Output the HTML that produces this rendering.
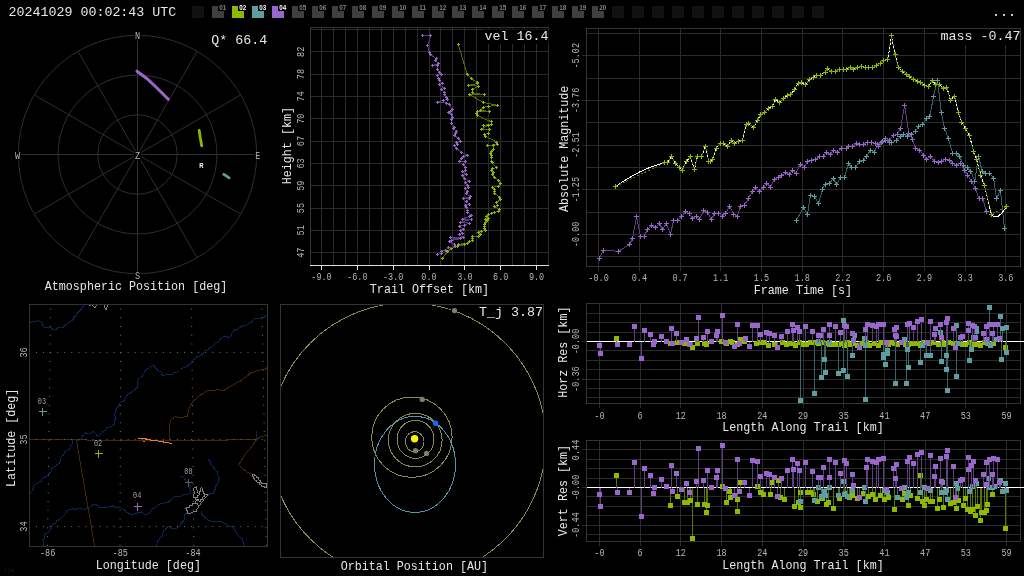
<!DOCTYPE html>
<html lang="en"><head><meta charset="utf-8"><title>Meteor trajectory 20241029 00:02:43 UTC</title>
<style>html,body{margin:0;padding:0;background:#000;overflow:hidden}svg{display:block;will-change:transform;transform:translateZ(0)}text{font-family:'Liberation Mono', 'DejaVu Sans Mono', monospace;white-space:pre}</style></head><body>
<svg width="1024" height="576" viewBox="0 0 1024 576">
<text transform="translate(8.4,16.3)" font-size="13.33" fill="#e8e8e8" text-anchor="start" >20241029 00:02:43 UTC</text>
<rect x="192" y="6" width="12" height="12" fill="#111111"/>
<rect x="212" y="6" width="12" height="12" fill="#3f3f3f"/>
<rect x="218" y="4" width="9" height="7" fill="#000"/>
<text transform="translate(219.3,9.9) scale(0.9,1)" font-size="7" fill="#868686" text-anchor="start" style="font-family:&quot;Liberation Sans&quot;,sans-serif;font-weight:bold">01</text>
<rect x="232" y="6" width="12" height="12" fill="#8fb800"/>
<rect x="238" y="4" width="9" height="7" fill="#000"/>
<text transform="translate(239.3,9.9) scale(0.9,1)" font-size="7" fill="#ffffff" text-anchor="start" style="font-family:&quot;Liberation Sans&quot;,sans-serif;font-weight:bold">02</text>
<rect x="252" y="6" width="12" height="12" fill="#5f9ea0"/>
<rect x="258" y="4" width="9" height="7" fill="#000"/>
<text transform="translate(259.3,9.9) scale(0.9,1)" font-size="7" fill="#ffffff" text-anchor="start" style="font-family:&quot;Liberation Sans&quot;,sans-serif;font-weight:bold">03</text>
<rect x="272" y="6" width="12" height="12" fill="#9966cc"/>
<rect x="278" y="4" width="9" height="7" fill="#000"/>
<text transform="translate(279.3,9.9) scale(0.9,1)" font-size="7" fill="#ffffff" text-anchor="start" style="font-family:&quot;Liberation Sans&quot;,sans-serif;font-weight:bold">04</text>
<rect x="292" y="6" width="12" height="12" fill="#3f3f3f"/>
<rect x="298" y="4" width="9" height="7" fill="#000"/>
<text transform="translate(299.3,9.9) scale(0.9,1)" font-size="7" fill="#868686" text-anchor="start" style="font-family:&quot;Liberation Sans&quot;,sans-serif;font-weight:bold">05</text>
<rect x="312" y="6" width="12" height="12" fill="#3f3f3f"/>
<rect x="318" y="4" width="9" height="7" fill="#000"/>
<text transform="translate(319.3,9.9) scale(0.9,1)" font-size="7" fill="#868686" text-anchor="start" style="font-family:&quot;Liberation Sans&quot;,sans-serif;font-weight:bold">06</text>
<rect x="332" y="6" width="12" height="12" fill="#3f3f3f"/>
<rect x="338" y="4" width="9" height="7" fill="#000"/>
<text transform="translate(339.3,9.9) scale(0.9,1)" font-size="7" fill="#868686" text-anchor="start" style="font-family:&quot;Liberation Sans&quot;,sans-serif;font-weight:bold">07</text>
<rect x="352" y="6" width="12" height="12" fill="#3f3f3f"/>
<rect x="358" y="4" width="9" height="7" fill="#000"/>
<text transform="translate(359.3,9.9) scale(0.9,1)" font-size="7" fill="#868686" text-anchor="start" style="font-family:&quot;Liberation Sans&quot;,sans-serif;font-weight:bold">08</text>
<rect x="372" y="6" width="12" height="12" fill="#3f3f3f"/>
<rect x="378" y="4" width="9" height="7" fill="#000"/>
<text transform="translate(379.3,9.9) scale(0.9,1)" font-size="7" fill="#868686" text-anchor="start" style="font-family:&quot;Liberation Sans&quot;,sans-serif;font-weight:bold">09</text>
<rect x="392" y="6" width="12" height="12" fill="#3f3f3f"/>
<rect x="398" y="4" width="9" height="7" fill="#000"/>
<text transform="translate(399.3,9.9) scale(0.9,1)" font-size="7" fill="#868686" text-anchor="start" style="font-family:&quot;Liberation Sans&quot;,sans-serif;font-weight:bold">10</text>
<rect x="412" y="6" width="12" height="12" fill="#3f3f3f"/>
<rect x="418" y="4" width="9" height="7" fill="#000"/>
<text transform="translate(419.3,9.9) scale(0.9,1)" font-size="7" fill="#868686" text-anchor="start" style="font-family:&quot;Liberation Sans&quot;,sans-serif;font-weight:bold">11</text>
<rect x="432" y="6" width="12" height="12" fill="#3f3f3f"/>
<rect x="438" y="4" width="9" height="7" fill="#000"/>
<text transform="translate(439.3,9.9) scale(0.9,1)" font-size="7" fill="#868686" text-anchor="start" style="font-family:&quot;Liberation Sans&quot;,sans-serif;font-weight:bold">12</text>
<rect x="452" y="6" width="12" height="12" fill="#3f3f3f"/>
<rect x="458" y="4" width="9" height="7" fill="#000"/>
<text transform="translate(459.3,9.9) scale(0.9,1)" font-size="7" fill="#868686" text-anchor="start" style="font-family:&quot;Liberation Sans&quot;,sans-serif;font-weight:bold">13</text>
<rect x="472" y="6" width="12" height="12" fill="#3f3f3f"/>
<rect x="478" y="4" width="9" height="7" fill="#000"/>
<text transform="translate(479.3,9.9) scale(0.9,1)" font-size="7" fill="#868686" text-anchor="start" style="font-family:&quot;Liberation Sans&quot;,sans-serif;font-weight:bold">14</text>
<rect x="492" y="6" width="12" height="12" fill="#3f3f3f"/>
<rect x="498" y="4" width="9" height="7" fill="#000"/>
<text transform="translate(499.3,9.9) scale(0.9,1)" font-size="7" fill="#868686" text-anchor="start" style="font-family:&quot;Liberation Sans&quot;,sans-serif;font-weight:bold">15</text>
<rect x="512" y="6" width="12" height="12" fill="#3f3f3f"/>
<rect x="518" y="4" width="9" height="7" fill="#000"/>
<text transform="translate(519.3,9.9) scale(0.9,1)" font-size="7" fill="#868686" text-anchor="start" style="font-family:&quot;Liberation Sans&quot;,sans-serif;font-weight:bold">16</text>
<rect x="532" y="6" width="12" height="12" fill="#3f3f3f"/>
<rect x="538" y="4" width="9" height="7" fill="#000"/>
<text transform="translate(539.3,9.9) scale(0.9,1)" font-size="7" fill="#868686" text-anchor="start" style="font-family:&quot;Liberation Sans&quot;,sans-serif;font-weight:bold">17</text>
<rect x="552" y="6" width="12" height="12" fill="#3f3f3f"/>
<rect x="558" y="4" width="9" height="7" fill="#000"/>
<text transform="translate(559.3,9.9) scale(0.9,1)" font-size="7" fill="#868686" text-anchor="start" style="font-family:&quot;Liberation Sans&quot;,sans-serif;font-weight:bold">18</text>
<rect x="572" y="6" width="12" height="12" fill="#3f3f3f"/>
<rect x="578" y="4" width="9" height="7" fill="#000"/>
<text transform="translate(579.3,9.9) scale(0.9,1)" font-size="7" fill="#868686" text-anchor="start" style="font-family:&quot;Liberation Sans&quot;,sans-serif;font-weight:bold">19</text>
<rect x="592" y="6" width="12" height="12" fill="#3f3f3f"/>
<rect x="598" y="4" width="9" height="7" fill="#000"/>
<text transform="translate(599.3,9.9) scale(0.9,1)" font-size="7" fill="#868686" text-anchor="start" style="font-family:&quot;Liberation Sans&quot;,sans-serif;font-weight:bold">20</text>
<rect x="612" y="6" width="12" height="12" fill="#111111"/>
<rect x="632" y="6" width="12" height="12" fill="#111111"/>
<rect x="652" y="6" width="12" height="12" fill="#111111"/>
<rect x="672" y="6" width="12" height="12" fill="#111111"/>
<rect x="692" y="6" width="12" height="12" fill="#111111"/>
<rect x="712" y="6" width="12" height="12" fill="#111111"/>
<rect x="732" y="6" width="12" height="12" fill="#111111"/>
<rect x="752" y="6" width="12" height="12" fill="#111111"/>
<rect x="772" y="6" width="12" height="12" fill="#111111"/>
<rect x="792" y="6" width="12" height="12" fill="#111111"/>
<rect x="812" y="6" width="12" height="12" fill="#111111"/>
<text transform="translate(1016,16.3)" font-size="13.33" fill="#ffffff" text-anchor="end" >...</text>
<circle cx="137.5" cy="154.5" r="39.73" fill="none" stroke="#2f2f2f" stroke-width="1"/>
<circle cx="137.5" cy="154.5" r="79.47" fill="none" stroke="#2f2f2f" stroke-width="1"/>
<circle cx="137.5" cy="154.5" r="119.2" fill="none" stroke="#2f2f2f" stroke-width="1"/>
<line x1="137.5" y1="154.5" x2="137.5" y2="35.3" stroke="#2f2f2f" stroke-width="1"  shape-rendering="crispEdges"/>
<line x1="137.5" y1="154.5" x2="197.1" y2="51.27" stroke="#2f2f2f" stroke-width="1" />
<line x1="137.5" y1="154.5" x2="240.73" y2="94.9" stroke="#2f2f2f" stroke-width="1" />
<line x1="137.5" y1="154.5" x2="256.7" y2="154.5" stroke="#2f2f2f" stroke-width="1"  shape-rendering="crispEdges"/>
<line x1="137.5" y1="154.5" x2="240.73" y2="214.1" stroke="#2f2f2f" stroke-width="1" />
<line x1="137.5" y1="154.5" x2="197.1" y2="257.73" stroke="#2f2f2f" stroke-width="1" />
<line x1="137.5" y1="154.5" x2="137.5" y2="273.7" stroke="#2f2f2f" stroke-width="1"  shape-rendering="crispEdges"/>
<line x1="137.5" y1="154.5" x2="77.9" y2="257.73" stroke="#2f2f2f" stroke-width="1" />
<line x1="137.5" y1="154.5" x2="34.27" y2="214.1" stroke="#2f2f2f" stroke-width="1" />
<line x1="137.5" y1="154.5" x2="18.3" y2="154.5" stroke="#2f2f2f" stroke-width="1"  shape-rendering="crispEdges"/>
<line x1="137.5" y1="154.5" x2="34.27" y2="94.9" stroke="#2f2f2f" stroke-width="1" />
<line x1="137.5" y1="154.5" x2="77.9" y2="51.27" stroke="#2f2f2f" stroke-width="1" />
<rect x="134" y="31.5" width="7" height="9" fill="#000"/>
<text transform="translate(137.5,39.4) scale(0.82,1)" font-size="10.4" fill="#b4b4b4" text-anchor="middle" >N</text>
<rect x="254.2" y="151.5" width="7" height="9" fill="#000"/>
<text transform="translate(257.7,159.4) scale(0.82,1)" font-size="10.4" fill="#b4b4b4" text-anchor="middle" >E</text>
<rect x="134" y="271.5" width="7" height="9" fill="#000"/>
<text transform="translate(137.5,279.4) scale(0.82,1)" font-size="10.4" fill="#b4b4b4" text-anchor="middle" >S</text>
<rect x="14" y="151.5" width="7" height="9" fill="#000"/>
<text transform="translate(17.5,159.4) scale(0.82,1)" font-size="10.4" fill="#b4b4b4" text-anchor="middle" >W</text>
<rect x="134" y="151.5" width="7" height="9" fill="#000"/>
<text transform="translate(137.5,159.4) scale(0.82,1)" font-size="10.4" fill="#b4b4b4" text-anchor="middle" >Z</text>
<polyline points="137,71.2 147.4,79 157,88 168.3,99.2" fill="none" stroke="#9966cc" stroke-width="3" stroke-linecap="round"/>
<polyline points="199.2,130.4 200.3,138 201.7,145.8" fill="none" stroke="#8fb800" stroke-width="2.8" stroke-linecap="round"/>
<polyline points="223.8,174.3 229.2,177.8" fill="none" stroke="#5f9ea0" stroke-width="2.8" stroke-linecap="round"/>
<text transform="translate(201.5,168) scale(0.85,1)" font-size="7" fill="#ffffff" text-anchor="middle" style="font-family:&quot;Liberation Sans&quot;,sans-serif;font-weight:bold">R</text>
<text transform="translate(267.2,44.2)" font-size="13.33" fill="#e6e6e6" text-anchor="end" >Q* 66.4</text>
<text transform="translate(136,290.2) scale(0.9,1)" font-size="13.0" fill="#e6e6e6" text-anchor="middle" >Atmospheric Position [deg]</text>
<line x1="321.5" y1="27.8" x2="321.5" y2="265.5" stroke="#2b2b2b" stroke-width="1"  shape-rendering="crispEdges"/>
<line x1="333.5" y1="27.8" x2="333.5" y2="265.5" stroke="#2b2b2b" stroke-width="1"  shape-rendering="crispEdges"/>
<line x1="345.5" y1="27.8" x2="345.5" y2="265.5" stroke="#2b2b2b" stroke-width="1"  shape-rendering="crispEdges"/>
<line x1="357.5" y1="27.8" x2="357.5" y2="265.5" stroke="#2b2b2b" stroke-width="1"  shape-rendering="crispEdges"/>
<line x1="369.5" y1="27.8" x2="369.5" y2="265.5" stroke="#2b2b2b" stroke-width="1"  shape-rendering="crispEdges"/>
<line x1="381.5" y1="27.8" x2="381.5" y2="265.5" stroke="#2b2b2b" stroke-width="1"  shape-rendering="crispEdges"/>
<line x1="393.5" y1="27.8" x2="393.5" y2="265.5" stroke="#2b2b2b" stroke-width="1"  shape-rendering="crispEdges"/>
<line x1="405.5" y1="27.8" x2="405.5" y2="265.5" stroke="#2b2b2b" stroke-width="1"  shape-rendering="crispEdges"/>
<line x1="417.5" y1="27.8" x2="417.5" y2="265.5" stroke="#2b2b2b" stroke-width="1"  shape-rendering="crispEdges"/>
<line x1="429.5" y1="27.8" x2="429.5" y2="265.5" stroke="#2b2b2b" stroke-width="1"  shape-rendering="crispEdges"/>
<line x1="440.5" y1="27.8" x2="440.5" y2="265.5" stroke="#2b2b2b" stroke-width="1"  shape-rendering="crispEdges"/>
<line x1="452.5" y1="27.8" x2="452.5" y2="265.5" stroke="#2b2b2b" stroke-width="1"  shape-rendering="crispEdges"/>
<line x1="464.5" y1="27.8" x2="464.5" y2="265.5" stroke="#2b2b2b" stroke-width="1"  shape-rendering="crispEdges"/>
<line x1="476.5" y1="27.8" x2="476.5" y2="265.5" stroke="#2b2b2b" stroke-width="1"  shape-rendering="crispEdges"/>
<line x1="488.5" y1="27.8" x2="488.5" y2="265.5" stroke="#2b2b2b" stroke-width="1"  shape-rendering="crispEdges"/>
<line x1="500.5" y1="27.8" x2="500.5" y2="265.5" stroke="#2b2b2b" stroke-width="1"  shape-rendering="crispEdges"/>
<line x1="512.5" y1="27.8" x2="512.5" y2="265.5" stroke="#2b2b2b" stroke-width="1"  shape-rendering="crispEdges"/>
<line x1="524.5" y1="27.8" x2="524.5" y2="265.5" stroke="#2b2b2b" stroke-width="1"  shape-rendering="crispEdges"/>
<line x1="536.5" y1="27.8" x2="536.5" y2="265.5" stroke="#2b2b2b" stroke-width="1"  shape-rendering="crispEdges"/>
<line x1="548.5" y1="27.8" x2="548.5" y2="265.5" stroke="#2b2b2b" stroke-width="1"  shape-rendering="crispEdges"/>
<line x1="310.4" y1="29.5" x2="548.6" y2="29.5" stroke="#2b2b2b" stroke-width="1"  shape-rendering="crispEdges"/>
<line x1="310.4" y1="51.5" x2="548.6" y2="51.5" stroke="#2b2b2b" stroke-width="1"  shape-rendering="crispEdges"/>
<line x1="310.4" y1="74.5" x2="548.6" y2="74.5" stroke="#2b2b2b" stroke-width="1"  shape-rendering="crispEdges"/>
<line x1="310.4" y1="96.5" x2="548.6" y2="96.5" stroke="#2b2b2b" stroke-width="1"  shape-rendering="crispEdges"/>
<line x1="310.4" y1="118.5" x2="548.6" y2="118.5" stroke="#2b2b2b" stroke-width="1"  shape-rendering="crispEdges"/>
<line x1="310.4" y1="141.5" x2="548.6" y2="141.5" stroke="#2b2b2b" stroke-width="1"  shape-rendering="crispEdges"/>
<line x1="310.4" y1="163.5" x2="548.6" y2="163.5" stroke="#2b2b2b" stroke-width="1"  shape-rendering="crispEdges"/>
<line x1="310.4" y1="185.5" x2="548.6" y2="185.5" stroke="#2b2b2b" stroke-width="1"  shape-rendering="crispEdges"/>
<line x1="310.4" y1="208.5" x2="548.6" y2="208.5" stroke="#2b2b2b" stroke-width="1"  shape-rendering="crispEdges"/>
<line x1="310.4" y1="230.5" x2="548.6" y2="230.5" stroke="#2b2b2b" stroke-width="1"  shape-rendering="crispEdges"/>
<line x1="310.4" y1="252.5" x2="548.6" y2="252.5" stroke="#2b2b2b" stroke-width="1"  shape-rendering="crispEdges"/>
<line x1="310.4" y1="27.5" x2="548.6" y2="27.5" stroke="#343434" stroke-width="1"  shape-rendering="crispEdges"/>
<line x1="310.5" y1="27.8" x2="310.5" y2="265.5" stroke="#343434" stroke-width="1"  shape-rendering="crispEdges"/>
<line x1="309.9" y1="265.5" x2="548.6" y2="265.5" stroke="#e0e0e0" stroke-width="1"  shape-rendering="crispEdges"/>
<line x1="321.5" y1="265.5" x2="321.5" y2="270" stroke="#e0e0e0" stroke-width="1"  shape-rendering="crispEdges"/>
<text transform="translate(321.51,280.2) scale(0.82,1)" font-size="10.4" fill="#b4b4b4" text-anchor="middle" >-9.0</text>
<line x1="357.5" y1="265.5" x2="357.5" y2="270" stroke="#e0e0e0" stroke-width="1"  shape-rendering="crispEdges"/>
<text transform="translate(357.35,280.2) scale(0.82,1)" font-size="10.4" fill="#b4b4b4" text-anchor="middle" >-6.0</text>
<line x1="393.5" y1="265.5" x2="393.5" y2="270" stroke="#e0e0e0" stroke-width="1"  shape-rendering="crispEdges"/>
<text transform="translate(393.19,280.2) scale(0.82,1)" font-size="10.4" fill="#b4b4b4" text-anchor="middle" >-3.0</text>
<line x1="429.5" y1="265.5" x2="429.5" y2="270" stroke="#e0e0e0" stroke-width="1"  shape-rendering="crispEdges"/>
<text transform="translate(429.03,280.2) scale(0.82,1)" font-size="10.4" fill="#b4b4b4" text-anchor="middle" >0.0</text>
<line x1="464.5" y1="265.5" x2="464.5" y2="270" stroke="#e0e0e0" stroke-width="1"  shape-rendering="crispEdges"/>
<text transform="translate(464.87,280.2) scale(0.82,1)" font-size="10.4" fill="#b4b4b4" text-anchor="middle" >3.0</text>
<line x1="500.5" y1="265.5" x2="500.5" y2="270" stroke="#e0e0e0" stroke-width="1"  shape-rendering="crispEdges"/>
<text transform="translate(500.71,280.2) scale(0.82,1)" font-size="10.4" fill="#b4b4b4" text-anchor="middle" >6.0</text>
<line x1="536.5" y1="265.5" x2="536.5" y2="270" stroke="#e0e0e0" stroke-width="1"  shape-rendering="crispEdges"/>
<text transform="translate(536.55,280.2) scale(0.82,1)" font-size="10.4" fill="#b4b4b4" text-anchor="middle" >9.0</text>
<text transform="translate(304.2,51.8) rotate(-90) scale(0.82,1)" font-size="10.4" fill="#b4b4b4" text-anchor="middle" >82</text>
<text transform="translate(304.2,74.12) rotate(-90) scale(0.82,1)" font-size="10.4" fill="#b4b4b4" text-anchor="middle" >78</text>
<text transform="translate(304.2,96.44) rotate(-90) scale(0.82,1)" font-size="10.4" fill="#b4b4b4" text-anchor="middle" >74</text>
<text transform="translate(304.2,118.76) rotate(-90) scale(0.82,1)" font-size="10.4" fill="#b4b4b4" text-anchor="middle" >70</text>
<text transform="translate(304.2,141.08) rotate(-90) scale(0.82,1)" font-size="10.4" fill="#b4b4b4" text-anchor="middle" >67</text>
<text transform="translate(304.2,163.4) rotate(-90) scale(0.82,1)" font-size="10.4" fill="#b4b4b4" text-anchor="middle" >63</text>
<text transform="translate(304.2,185.72) rotate(-90) scale(0.82,1)" font-size="10.4" fill="#b4b4b4" text-anchor="middle" >59</text>
<text transform="translate(304.2,208.04) rotate(-90) scale(0.82,1)" font-size="10.4" fill="#b4b4b4" text-anchor="middle" >55</text>
<text transform="translate(304.2,230.36) rotate(-90) scale(0.82,1)" font-size="10.4" fill="#b4b4b4" text-anchor="middle" >51</text>
<text transform="translate(304.2,252.68) rotate(-90) scale(0.82,1)" font-size="10.4" fill="#b4b4b4" text-anchor="middle" >47</text>
<text transform="translate(290.5,145.6) rotate(-90) scale(0.9,1)" font-size="13.0" fill="#e6e6e6" text-anchor="middle" >Height [km]</text>
<text transform="translate(429.5,293) scale(0.9,1)" font-size="13.0" fill="#e6e6e6" text-anchor="middle" >Trail Offset [km]</text>
<rect x="483" y="29.5" width="65.6" height="14.5" fill="#000"/>
<text transform="translate(548.4,39.7)" font-size="13.33" fill="#e6e6e6" text-anchor="end" >vel 16.4</text>
<polyline points="458.4,44.5 467.3,74.5 471.2,78.4 477.1,82.3 477.7,83.6 468.3,85.3 478.6,86.2 472.5,89.5 472.5,92.9 484.5,94.6 469.2,94.6 483.6,102.4 497.5,105.4 488.1,106.3 483.6,107.3 480.3,110.2 489.4,111.5 477.7,111.5 476.7,113.4 477.3,115.4 491.4,121.9 491.8,124.5 483.6,125.2 488.1,125.4 481.4,129.3 489.4,129.3 488.4,133.4 484.5,134.3 485.5,136.2 496.6,142.1 497.5,144.4 487.5,145.6 493.3,145.6 493.3,149.5 491.8,151.2 490.7,153.2 491.4,155.8 491.8,157.7 491.4,161 492,162.9 496.2,167.6 492,168.7 491.4,170.6 493.3,172.3 492.3,174.5 494.6,177.5 498.5,180.1 500.8,183.9 498.5,186.2 492.4,187.2 494.4,189.1 494.6,191.1 494.9,193.4 499.2,197.1 500.5,199.5 496.3,202.5 497.5,205.1 494.4,206.7 499.5,209.4 498.5,211.4 494.6,212.3 491.4,213.3 488.1,214.9 486.8,216.8 488.4,218.2 485.9,219.2 487.9,220.8 485.3,222.7 484.2,224.7 484.5,226.6 484.9,228.6 485.5,230.6 481.4,231.2 478.4,232.2 480.3,234.5 478.6,236.5 472.5,236.5 472.9,238.4 472.2,240.4 469.2,241.7 467.3,243.4 458.4,244.3 464.4,244.7 457.5,246.2 451.7,248.4 447.1,251.8 442.6,258.3" fill="none" stroke="#536b00" stroke-width="1" shape-rendering="crispEdges"/>
<path d="M457 44.5H460M458.5 43V46M466 74.5H469M467.5 73V76M470 78.5H473M471.5 77V80M476 82.5H479M477.5 81V84M476 83.5H479M477.5 82V85M467 85.5H470M468.5 84V87M477 86.5H480M478.5 85V88M471 89.5H474M472.5 88V91M471 92.5H474M472.5 91V94M483 94.5H486M484.5 93V96M468 94.5H471M469.5 93V96M482 102.5H485M483.5 101V104M496 105.5H499M497.5 104V107M487 106.5H490M488.5 105V108M482 107.5H485M483.5 106V109M479 110.5H482M480.5 109V112M488 111.5H491M489.5 110V113M476 111.5H479M477.5 110V113M475 113.5H478M476.5 112V115M476 115.5H479M477.5 114V117M490 121.5H493M491.5 120V123M490 124.5H493M491.5 123V126M482 125.5H485M483.5 124V127M487 125.5H490M488.5 124V127M480 129.5H483M481.5 128V131M488 129.5H491M489.5 128V131M487 133.5H490M488.5 132V135M483 134.5H486M484.5 133V136M484 136.5H487M485.5 135V138M495 142.5H498M496.5 141V144M496 144.5H499M497.5 143V146M486 145.5H489M487.5 144V147M492 145.5H495M493.5 144V147M492 149.5H495M493.5 148V151M490 151.5H493M491.5 150V153M489 153.5H492M490.5 152V155M490 155.5H493M491.5 154V157M490 157.5H493M491.5 156V159M490 161.5H493M491.5 160V163M491 162.5H494M492.5 161V164M495 167.5H498M496.5 166V169M491 168.5H494M492.5 167V170M490 170.5H493M491.5 169V172M492 172.5H495M493.5 171V174M491 174.5H494M492.5 173V176M493 177.5H496M494.5 176V179M497 180.5H500M498.5 179V182M499 183.5H502M500.5 182V185M497 186.5H500M498.5 185V188M491 187.5H494M492.5 186V189M493 189.5H496M494.5 188V191M493 191.5H496M494.5 190V193M493 193.5H496M494.5 192V195M498 197.5H501M499.5 196V199M499 199.5H502M500.5 198V201M495 202.5H498M496.5 201V204M496 205.5H499M497.5 204V207M493 206.5H496M494.5 205V208M498 209.5H501M499.5 208V211M497 211.5H500M498.5 210V213M493 212.5H496M494.5 211V214M490 213.5H493M491.5 212V215M487 214.5H490M488.5 213V216M485 216.5H488M486.5 215V218M487 218.5H490M488.5 217V220M484 219.5H487M485.5 218V221M486 220.5H489M487.5 219V222M484 222.5H487M485.5 221V224M483 224.5H486M484.5 223V226M483 226.5H486M484.5 225V228M483 228.5H486M484.5 227V230M484 230.5H487M485.5 229V232M480 231.5H483M481.5 230V233M477 232.5H480M478.5 231V234M479 234.5H482M480.5 233V236M477 236.5H480M478.5 235V238M471 236.5H474M472.5 235V238M471 238.5H474M472.5 237V240M471 240.5H474M472.5 239V242M468 241.5H471M469.5 240V243M466 243.5H469M467.5 242V245M457 244.5H460M458.5 243V246M463 244.5H466M464.5 243V246M456 246.5H459M457.5 245V248M450 248.5H453M451.5 247V250M446 251.5H449M447.5 250V253M441 258.5H444M442.5 257V260" stroke="#8fb800" stroke-width="1" fill="none" shape-rendering="crispEdges"/>
<polyline points="422.4,35.4 430.8,35.4 427.6,45.4 429.5,52.3 430.4,54.3 436,58.6 435.4,60.4 438.4,63.4 432.4,65.5 437.6,65.5 437.1,69.3 439.7,72.5 441.5,74.5 437.3,75.4 438.4,78.4 439.7,80.7 442.3,83.6 439.3,84.5 444.5,88.4 441.5,89.5 444.5,92 444.5,94.6 446.2,97.8 447.8,99.4 443.6,100.2 437.3,102.4 446.5,103 449.7,104.3 452.3,109.5 450.4,111.5 448.7,112.4 451.4,114.7 452.3,117.3 451.4,119.7 451.7,123.2 454.3,127.1 453.6,128.4 456.2,131.4 455.6,133.6 454.5,135.6 458.4,138.4 460.5,141.4 456.9,142.5 457.5,144.4 454.3,145.6 456.5,148.6 461.4,152.2 467.3,155.4 463.4,156.7 461.8,158.4 459.5,161.4 465.3,161.4 463.1,164.2 465.3,167.4 465.6,170.6 462.5,171.3 466.2,174.5 462.5,175.2 464.4,178.4 469.2,181.4 465.7,182.3 467.7,185.6 468.2,187.6 465.3,188.6 467.3,191.8 466.4,193.4 470.3,196.7 463.4,198.4 469.5,198.6 466.2,201.2 469.5,204.5 465.6,205.1 466.4,207.7 467.7,210.7 467.9,212.3 471.5,215.2 469.9,216.2 462.5,219.2 471.5,219.2 460.5,222.4 469.2,223.1 464.4,225.3 459.5,226.2 463.4,229.2 460.1,230.6 462.5,233.2 459.2,234.5 463.4,237.5 450.6,237.8 460.1,238.8 451.4,240.4 449.1,241.7 454.9,244.9 455.6,246.9 448.4,247.1 445.8,250.1 441.6,251.2 441.9,253.4 437.3,254.4" fill="none" stroke="#573a77" stroke-width="1" shape-rendering="crispEdges"/>
<path d="M421 35.5H424M422.5 34V37M429 35.5H432M430.5 34V37M426 45.5H429M427.5 44V47M428 52.5H431M429.5 51V54M429 54.5H432M430.5 53V56M435 58.5H438M436.5 57V60M434 60.5H437M435.5 59V62M437 63.5H440M438.5 62V65M431 65.5H434M432.5 64V67M436 65.5H439M437.5 64V67M436 69.5H439M437.5 68V71M438 72.5H441M439.5 71V74M440 74.5H443M441.5 73V76M436 75.5H439M437.5 74V77M437 78.5H440M438.5 77V80M438 80.5H441M439.5 79V82M441 83.5H444M442.5 82V85M438 84.5H441M439.5 83V86M443 88.5H446M444.5 87V90M440 89.5H443M441.5 88V91M443 92.5H446M444.5 91V94M443 94.5H446M444.5 93V96M445 97.5H448M446.5 96V99M446 99.5H449M447.5 98V101M442 100.5H445M443.5 99V102M436 102.5H439M437.5 101V104M445 103.5H448M446.5 102V105M448 104.5H451M449.5 103V106M451 109.5H454M452.5 108V111M449 111.5H452M450.5 110V113M447 112.5H450M448.5 111V114M450 114.5H453M451.5 113V116M451 117.5H454M452.5 116V119M450 119.5H453M451.5 118V121M450 123.5H453M451.5 122V125M453 127.5H456M454.5 126V129M452 128.5H455M453.5 127V130M455 131.5H458M456.5 130V133M454 133.5H457M455.5 132V135M453 135.5H456M454.5 134V137M457 138.5H460M458.5 137V140M459 141.5H462M460.5 140V143M455 142.5H458M456.5 141V144M456 144.5H459M457.5 143V146M453 145.5H456M454.5 144V147M455 148.5H458M456.5 147V150M460 152.5H463M461.5 151V154M466 155.5H469M467.5 154V157M462 156.5H465M463.5 155V158M460 158.5H463M461.5 157V160M458 161.5H461M459.5 160V163M464 161.5H467M465.5 160V163M462 164.5H465M463.5 163V166M464 167.5H467M465.5 166V169M464 170.5H467M465.5 169V172M461 171.5H464M462.5 170V173M465 174.5H468M466.5 173V176M461 175.5H464M462.5 174V177M463 178.5H466M464.5 177V180M468 181.5H471M469.5 180V183M464 182.5H467M465.5 181V184M466 185.5H469M467.5 184V187M467 187.5H470M468.5 186V189M464 188.5H467M465.5 187V190M466 191.5H469M467.5 190V193M465 193.5H468M466.5 192V195M469 196.5H472M470.5 195V198M462 198.5H465M463.5 197V200M468 198.5H471M469.5 197V200M465 201.5H468M466.5 200V203M468 204.5H471M469.5 203V206M464 205.5H467M465.5 204V207M465 207.5H468M466.5 206V209M466 210.5H469M467.5 209V212M466 212.5H469M467.5 211V214M470 215.5H473M471.5 214V217M468 216.5H471M469.5 215V218M461 219.5H464M462.5 218V221M470 219.5H473M471.5 218V221M459 222.5H462M460.5 221V224M468 223.5H471M469.5 222V225M463 225.5H466M464.5 224V227M458 226.5H461M459.5 225V228M462 229.5H465M463.5 228V231M459 230.5H462M460.5 229V232M461 233.5H464M462.5 232V235M458 234.5H461M459.5 233V236M462 237.5H465M463.5 236V239M449 237.5H452M450.5 236V239M459 238.5H462M460.5 237V240M450 240.5H453M451.5 239V242M448 241.5H451M449.5 240V243M453 244.5H456M454.5 243V246M454 246.5H457M455.5 245V248M447 247.5H450M448.5 246V249M444 250.5H447M445.5 249V252M440 251.5H443M441.5 250V253M440 253.5H443M441.5 252V255M436 254.5H439M437.5 253V256" stroke="#9966cc" stroke-width="1" fill="none" shape-rendering="crispEdges"/>
<line x1="598.5" y1="28.4" x2="598.5" y2="270.7" stroke="#2b2b2b" stroke-width="1"  shape-rendering="crispEdges"/>
<line x1="639.5" y1="28.4" x2="639.5" y2="270.7" stroke="#2b2b2b" stroke-width="1"  shape-rendering="crispEdges"/>
<line x1="680.5" y1="28.4" x2="680.5" y2="270.7" stroke="#2b2b2b" stroke-width="1"  shape-rendering="crispEdges"/>
<line x1="720.5" y1="28.4" x2="720.5" y2="270.7" stroke="#2b2b2b" stroke-width="1"  shape-rendering="crispEdges"/>
<line x1="761.5" y1="28.4" x2="761.5" y2="270.7" stroke="#2b2b2b" stroke-width="1"  shape-rendering="crispEdges"/>
<line x1="802.5" y1="28.4" x2="802.5" y2="270.7" stroke="#2b2b2b" stroke-width="1"  shape-rendering="crispEdges"/>
<line x1="842.5" y1="28.4" x2="842.5" y2="270.7" stroke="#2b2b2b" stroke-width="1"  shape-rendering="crispEdges"/>
<line x1="883.5" y1="28.4" x2="883.5" y2="270.7" stroke="#2b2b2b" stroke-width="1"  shape-rendering="crispEdges"/>
<line x1="924.5" y1="28.4" x2="924.5" y2="270.7" stroke="#2b2b2b" stroke-width="1"  shape-rendering="crispEdges"/>
<line x1="965.5" y1="28.4" x2="965.5" y2="270.7" stroke="#2b2b2b" stroke-width="1"  shape-rendering="crispEdges"/>
<line x1="1005.5" y1="28.4" x2="1005.5" y2="270.7" stroke="#2b2b2b" stroke-width="1"  shape-rendering="crispEdges"/>
<line x1="586.5" y1="33.5" x2="1020.7" y2="33.5" stroke="#2b2b2b" stroke-width="1"  shape-rendering="crispEdges"/>
<line x1="581.8" y1="55.5" x2="1020.7" y2="55.5" stroke="#2b2b2b" stroke-width="1"  shape-rendering="crispEdges"/>
<line x1="586.5" y1="78.5" x2="1020.7" y2="78.5" stroke="#2b2b2b" stroke-width="1"  shape-rendering="crispEdges"/>
<line x1="581.8" y1="100.5" x2="1020.7" y2="100.5" stroke="#2b2b2b" stroke-width="1"  shape-rendering="crispEdges"/>
<line x1="586.5" y1="122.5" x2="1020.7" y2="122.5" stroke="#2b2b2b" stroke-width="1"  shape-rendering="crispEdges"/>
<line x1="581.8" y1="145.5" x2="1020.7" y2="145.5" stroke="#2b2b2b" stroke-width="1"  shape-rendering="crispEdges"/>
<line x1="586.5" y1="167.5" x2="1020.7" y2="167.5" stroke="#2b2b2b" stroke-width="1"  shape-rendering="crispEdges"/>
<line x1="581.8" y1="189.5" x2="1020.7" y2="189.5" stroke="#2b2b2b" stroke-width="1"  shape-rendering="crispEdges"/>
<line x1="586.5" y1="212.5" x2="1020.7" y2="212.5" stroke="#2b2b2b" stroke-width="1"  shape-rendering="crispEdges"/>
<line x1="581.8" y1="234.5" x2="1020.7" y2="234.5" stroke="#2b2b2b" stroke-width="1"  shape-rendering="crispEdges"/>
<line x1="586.5" y1="256.5" x2="1020.7" y2="256.5" stroke="#2b2b2b" stroke-width="1"  shape-rendering="crispEdges"/>
<rect x="586.5" y="28.5" width="434" height="238" fill="none" stroke="#343434" shape-rendering="crispEdges"/>
<text transform="translate(598.6,280.7) scale(0.82,1)" font-size="10.4" fill="#b4b4b4" text-anchor="middle" >-0.0</text>
<text transform="translate(639.32,280.7) scale(0.82,1)" font-size="10.4" fill="#b4b4b4" text-anchor="middle" >0.4</text>
<text transform="translate(680.04,280.7) scale(0.82,1)" font-size="10.4" fill="#b4b4b4" text-anchor="middle" >0.7</text>
<text transform="translate(720.76,280.7) scale(0.82,1)" font-size="10.4" fill="#b4b4b4" text-anchor="middle" >1.1</text>
<text transform="translate(761.48,280.7) scale(0.82,1)" font-size="10.4" fill="#b4b4b4" text-anchor="middle" >1.5</text>
<text transform="translate(802.2,280.7) scale(0.82,1)" font-size="10.4" fill="#b4b4b4" text-anchor="middle" >1.8</text>
<text transform="translate(842.92,280.7) scale(0.82,1)" font-size="10.4" fill="#b4b4b4" text-anchor="middle" >2.2</text>
<text transform="translate(883.64,280.7) scale(0.82,1)" font-size="10.4" fill="#b4b4b4" text-anchor="middle" >2.6</text>
<text transform="translate(924.36,280.7) scale(0.82,1)" font-size="10.4" fill="#b4b4b4" text-anchor="middle" >2.9</text>
<text transform="translate(965.08,280.7) scale(0.82,1)" font-size="10.4" fill="#b4b4b4" text-anchor="middle" >3.3</text>
<text transform="translate(1005.8,280.7) scale(0.82,1)" font-size="10.4" fill="#b4b4b4" text-anchor="middle" >3.6</text>
<text transform="translate(579.4,55.78) rotate(-90) scale(0.82,1)" font-size="10.4" fill="#b4b4b4" text-anchor="middle" >-5.02</text>
<text transform="translate(579.4,100.44) rotate(-90) scale(0.82,1)" font-size="10.4" fill="#b4b4b4" text-anchor="middle" >-3.76</text>
<text transform="translate(579.4,145.1) rotate(-90) scale(0.82,1)" font-size="10.4" fill="#b4b4b4" text-anchor="middle" >-2.51</text>
<text transform="translate(579.4,189.76) rotate(-90) scale(0.82,1)" font-size="10.4" fill="#b4b4b4" text-anchor="middle" >-1.25</text>
<text transform="translate(579.4,234.42) rotate(-90) scale(0.82,1)" font-size="10.4" fill="#b4b4b4" text-anchor="middle" >-0.00</text>
<text transform="translate(567.6,148.8) rotate(-90) scale(0.9,1)" font-size="13.0" fill="#e6e6e6" text-anchor="middle" >Absolute Magnitude</text>
<text transform="translate(802.9,293.6) scale(0.9,1)" font-size="13.0" fill="#e6e6e6" text-anchor="middle" >Frame Time [s]</text>
<rect x="938" y="29.5" width="82" height="15.5" fill="#000"/>
<text transform="translate(1020.5,39.8)" font-size="13.33" fill="#e6e6e6" text-anchor="end" >mass -0.47</text>
<polyline points="796.5,220 803.5,207.5 807.5,214.4 810.4,195 814.6,196.5 818.5,203.5 822.5,189.4 825.2,184 829.6,183.1 833.5,178.5 836.5,184.4 840.6,177.2 844.6,177.2 848.5,163.1 851.2,167.5 855.6,167.5 859.4,161.2 863.5,160.4 866.5,156.2 870.6,150.4 874.6,152.2 877.5,144.4 882.5,141.2 885.4,140.2 889.4,142.5 891.9,142.5 896.2,140.2 900.6,136.6 903.5,134 907.5,136.6 911.5,134 915.4,131.2 918.5,126.5 922.5,124.1 926.5,118.8 929.8,116.9 933.5,96.2 937.5,80.2 941.2,112.5 944.5,128.5 948.5,138.8 952.5,153.1 956.6,153.1 959.8,156.5 963.5,165.6 967.2,167.8 970.8,171.2 974.8,181.2 978.5,156.5 982.2,171.2 985.4,173.5 989.8,173.5 993.5,178.1 996.6,198.5 1000.4,190.2 1004.5,228.5" fill="none" stroke="#38605f" stroke-width="1" shape-rendering="crispEdges"/>
<path d="M794 220.5H799M796.5 218V223M801 207.5H806M803.5 205V210M805 214.5H810M807.5 212V217M808 195.5H813M810.5 193V198M812 196.5H817M814.5 194V199M816 203.5H821M818.5 201V206M820 189.5H825M822.5 187V192M823 184.5H828M825.5 182V187M827 183.5H832M829.5 181V186M831 178.5H836M833.5 176V181M834 184.5H839M836.5 182V187M838 177.5H843M840.5 175V180M842 177.5H847M844.5 175V180M846 163.5H851M848.5 161V166M849 167.5H854M851.5 165V170M853 167.5H858M855.5 165V170M857 161.5H862M859.5 159V164M861 160.5H866M863.5 158V163M864 156.5H869M866.5 154V159M868 150.5H873M870.5 148V153M872 152.5H877M874.5 150V155M875 144.5H880M877.5 142V147M880 141.5H885M882.5 139V144M883 140.5H888M885.5 138V143M887 142.5H892M889.5 140V145M889 142.5H894M891.5 140V145M894 140.5H899M896.5 138V143M898 136.5H903M900.5 134V139M901 134.5H906M903.5 132V137M905 136.5H910M907.5 134V139M909 134.5H914M911.5 132V137M913 131.5H918M915.5 129V134M916 126.5H921M918.5 124V129M920 124.5H925M922.5 122V127M924 118.5H929M926.5 116V121M927 116.5H932M929.5 114V119M931 96.5H936M933.5 94V99M935 80.5H940M937.5 78V83M939 112.5H944M941.5 110V115M942 128.5H947M944.5 126V131M946 138.5H951M948.5 136V141M950 153.5H955M952.5 151V156M954 153.5H959M956.5 151V156M957 156.5H962M959.5 154V159M961 165.5H966M963.5 163V168M965 167.5H970M967.5 165V170M968 171.5H973M970.5 169V174M972 181.5H977M974.5 179V184M976 156.5H981M978.5 154V159M980 171.5H985M982.5 169V174M983 173.5H988M985.5 171V176M987 173.5H992M989.5 171V176M991 178.5H996M993.5 176V181M994 198.5H999M996.5 196V201M998 190.5H1003M1000.5 188V193M1002 228.5H1007M1004.5 226V231" stroke="#5f9ea0" stroke-width="1" fill="none" shape-rendering="crispEdges"/>
<polyline points="599.5,258.2 603.5,250.4 618.5,251.2 629.5,244.4 632.5,238.5 636.6,216.6 640.4,236.2 644.5,236.2 647.2,229.5 651.2,225.8 655.4,227.2 659.5,223.5 662.5,229.5 666.4,223.5 670.6,234.4 673.5,220.4 677.6,220.4 681.6,216.6 685.4,211.6 689.1,213.5 692.5,218.5 696.2,216.2 699.5,219.4 703.5,210.8 707.2,212.2 711.4,219.4 714.8,213.1 718.8,213.1 722.5,216.2 725.6,213.1 729.6,206.2 733.5,214.4 737.5,216.2 740.2,206.2 744.4,205.2 748.5,198.1 752.5,191.2 755.4,187.9 759.4,191.2 763.5,187.2 766.5,183.1 770.6,187.1 774.4,179.4 778.5,177.2 781.9,175.6 785.6,172.5 789.4,174.4 792.5,170.2 796.2,173.4 800,164.1 804.4,167.2 807.2,161.2 811.2,160 815.6,159.4 819.4,156.5 823.1,156.5 826.5,152.5 830.4,154.4 833.5,150 837.5,152.5 841.2,148.1 846.2,148.1 848.8,146 852.5,146.5 856.5,143.4 859.4,144.4 863.8,144.4 867.5,142.2 871.5,142.2 875,143.8 878.5,146.5 881.9,142.5 885.4,138.1 889.4,140.2 893.1,135.6 897.5,134 900.6,128.5 904.6,105.2 908.8,133.5 912.5,139.8 915.6,148.1 919.8,150.4 923.5,155 926.5,159.4 930.4,156.2 934.4,161.2 938.5,162.2 941.6,161 945.4,159.4 949.8,160.2 952.5,163.4 956.6,165.2 960.4,163.5 964.5,170.2 967.5,175 971.4,181 975.4,188.1 979.1,198.8 982.9,198.8 986.2,211.5" fill="none" stroke="#5e3f80" stroke-width="1" shape-rendering="crispEdges"/>
<path d="M597 258.5H602M599.5 256V261M601 250.5H606M603.5 248V253M616 251.5H621M618.5 249V254M627 244.5H632M629.5 242V247M630 238.5H635M632.5 236V241M634 216.5H639M636.5 214V219M638 236.5H643M640.5 234V239M642 236.5H647M644.5 234V239M645 229.5H650M647.5 227V232M649 225.5H654M651.5 223V228M653 227.5H658M655.5 225V230M657 223.5H662M659.5 221V226M660 229.5H665M662.5 227V232M664 223.5H669M666.5 221V226M668 234.5H673M670.5 232V237M671 220.5H676M673.5 218V223M675 220.5H680M677.5 218V223M679 216.5H684M681.5 214V219M683 211.5H688M685.5 209V214M687 213.5H692M689.5 211V216M690 218.5H695M692.5 216V221M694 216.5H699M696.5 214V219M697 219.5H702M699.5 217V222M701 210.5H706M703.5 208V213M705 212.5H710M707.5 210V215M709 219.5H714M711.5 217V222M712 213.5H717M714.5 211V216M716 213.5H721M718.5 211V216M720 216.5H725M722.5 214V219M723 213.5H728M725.5 211V216M727 206.5H732M729.5 204V209M731 214.5H736M733.5 212V217M735 216.5H740M737.5 214V219M738 206.5H743M740.5 204V209M742 205.5H747M744.5 203V208M746 198.5H751M748.5 196V201M750 191.5H755M752.5 189V194M753 187.5H758M755.5 185V190M757 191.5H762M759.5 189V194M761 187.5H766M763.5 185V190M764 183.5H769M766.5 181V186M768 187.5H773M770.5 185V190M772 179.5H777M774.5 177V182M776 177.5H781M778.5 175V180M779 175.5H784M781.5 173V178M783 172.5H788M785.5 170V175M787 174.5H792M789.5 172V177M790 170.5H795M792.5 168V173M794 173.5H799M796.5 171V176M798 164.5H803M800.5 162V167M802 167.5H807M804.5 165V170M805 161.5H810M807.5 159V164M809 160.5H814M811.5 158V163M813 159.5H818M815.5 157V162M817 156.5H822M819.5 154V159M821 156.5H826M823.5 154V159M824 152.5H829M826.5 150V155M828 154.5H833M830.5 152V157M831 150.5H836M833.5 148V153M835 152.5H840M837.5 150V155M839 148.5H844M841.5 146V151M844 148.5H849M846.5 146V151M846 146.5H851M848.5 144V149M850 146.5H855M852.5 144V149M854 143.5H859M856.5 141V146M857 144.5H862M859.5 142V147M861 144.5H866M863.5 142V147M865 142.5H870M867.5 140V145M869 142.5H874M871.5 140V145M873 143.5H878M875.5 141V146M876 146.5H881M878.5 144V149M879 142.5H884M881.5 140V145M883 138.5H888M885.5 136V141M887 140.5H892M889.5 138V143M891 135.5H896M893.5 133V138M895 134.5H900M897.5 132V137M898 128.5H903M900.5 126V131M902 105.5H907M904.5 103V108M906 133.5H911M908.5 131V136M910 139.5H915M912.5 137V142M913 148.5H918M915.5 146V151M917 150.5H922M919.5 148V153M921 155.5H926M923.5 153V158M924 159.5H929M926.5 157V162M928 156.5H933M930.5 154V159M932 161.5H937M934.5 159V164M936 162.5H941M938.5 160V165M939 161.5H944M941.5 159V164M943 159.5H948M945.5 157V162M947 160.5H952M949.5 158V163M950 163.5H955M952.5 161V166M954 165.5H959M956.5 163V168M958 163.5H963M960.5 161V166M962 170.5H967M964.5 168V173M965 175.5H970M967.5 173V178M969 181.5H974M971.5 179V184M973 188.5H978M975.5 186V191M977 198.5H982M979.5 196V201M980 198.5H985M982.5 196V201M984 211.5H989M986.5 209V214" stroke="#9966cc" stroke-width="1" fill="none" shape-rendering="crispEdges"/>
<polyline points="615.4,186.5 623.5,181.2 632.2,176 639.8,171.9 651,166.9 658.5,164.4 664.5,162.8 667.5,162.8 671.4,156.6 675.4,163.1 679.1,167.1 682.2,170.6 686,161.5 690.4,156.9 694.5,169.4 697.2,156.2 701.6,156.5 705.4,146.2 708.8,161.2 710.6,161.9 712.5,159.4 716.2,148.1 720,143.5 723.1,143.5 727.5,146.2 731.2,140.6 734.4,143.1 738.1,141.2 742.5,140 746,124.6 748.1,123.5 753.8,127.5 757.5,120.6 760.4,114.6 764.6,112.5 768.1,108.5 772.5,106.5 775.4,99.6 779.8,102.5 783.1,98.5 787.5,95.6 790.6,94.4 794.4,89.6 798.1,83.5 801,82.1 805.6,84.8 809.4,79.4 813.8,77.2 816.2,75.2 820.6,75.2 825,72.2 827.5,68.9 831.5,71.4 835.6,71.4 839.4,69.2 843.1,69.2 846.9,69 850.6,67.4 853.5,69.2 857.1,67.8 861.2,66.1 865,67.4 868.8,67.8 872.5,67.8 876.2,65.5 880,63.6 883.1,60.8 887.8,59.2 891.5,35.8 895,54.5 898.5,67.8 902.5,71.1 906.2,74.2 909.4,76.1 913.1,79 917.2,81.1 920,82.4 924.4,85.2 928.1,86.8 932.5,80.2 935.2,84.2 939.4,84.2 943.1,88.9 946.9,87.4 950.4,100.2 954.5,96 958.5,112.5 961.6,122.1 965.4,128.1 969.5,135.6 973.5,151.2 976.6,159.8 980.8,175.2 984.5,185.6 991.6,215 993.5,216.5 997.9,216.5 1002.2,212.8 1006.6,206.5" fill="none" stroke="#ffffff" stroke-width="1.0" shape-rendering="crispEdges"/>
<polyline points="615.4,186.5 664.5,162.8 667.5,162.8 671.4,156.6 675.4,163.1 679.1,167.1 682.2,170.6 686,161.5 690.4,156.9 694.5,169.4 697.2,156.2 701.6,156.5 705.4,146.2 708.8,161.2 710.6,161.9 712.5,159.4 716.2,148.1 720,143.5 723.1,143.5 727.5,146.2 731.2,140.6 734.4,143.1 738.1,141.2 742.5,140 746,124.6 748.1,123.5 753.8,127.5 757.5,120.6 760.4,114.6 764.6,112.5 768.1,108.5 772.5,106.5 775.4,99.6 779.8,102.5 783.1,98.5 787.5,95.6 790.6,94.4 794.4,89.6 798.1,83.5 801,82.1 805.6,84.8 809.4,79.4 813.8,77.2 816.2,75.2 820.6,75.2 825,72.2 827.5,68.9 831.5,71.4 835.6,71.4 839.4,69.2 843.1,69.2 846.9,69 850.6,67.4 853.5,69.2 857.1,67.8 861.2,66.1 865,67.4 868.8,67.8 872.5,67.8 876.2,65.5 880,63.6 883.1,60.8 887.8,59.2 891.5,35.8 895,54.5 898.5,67.8 902.5,71.1 906.2,74.2 909.4,76.1 913.1,79 917.2,81.1 920,82.4 924.4,85.2 928.1,86.8 932.5,80.2 935.2,84.2 939.4,84.2 943.1,88.9 946.9,87.4 950.4,100.2 954.5,96 958.5,112.5 961.6,122.1 965.4,128.1 969.5,135.6 973.5,151.2 976.6,159.8 980.8,175.2 984.5,185.6 991.6,214.4 1006.6,206.5" fill="none" stroke="#5a7400" stroke-width="1" shape-rendering="crispEdges" stroke-dasharray="2.2 1.8"/>
<path d="M613 186.5H618M615.5 184V189M662 162.5H667M664.5 160V165M665 162.5H670M667.5 160V165M669 156.5H674M671.5 154V159M673 163.5H678M675.5 161V166M677 167.5H682M679.5 165V170M680 170.5H685M682.5 168V173M684 161.5H689M686.5 159V164M688 156.5H693M690.5 154V159M692 169.5H697M694.5 167V172M695 156.5H700M697.5 154V159M699 156.5H704M701.5 154V159M703 146.5H708M705.5 144V149M706 161.5H711M708.5 159V164M708 161.5H713M710.5 159V164M710 159.5H715M712.5 157V162M714 148.5H719M716.5 146V151M718 143.5H723M720.5 141V146M721 143.5H726M723.5 141V146M725 146.5H730M727.5 144V149M729 140.5H734M731.5 138V143M732 143.5H737M734.5 141V146M736 141.5H741M738.5 139V144M740 140.5H745M742.5 138V143M744 124.5H749M746.5 122V127M746 123.5H751M748.5 121V126M751 127.5H756M753.5 125V130M755 120.5H760M757.5 118V123M758 114.5H763M760.5 112V117M762 112.5H767M764.5 110V115M766 108.5H771M768.5 106V111M770 106.5H775M772.5 104V109M773 99.5H778M775.5 97V102M777 102.5H782M779.5 100V105M781 98.5H786M783.5 96V101M785 95.5H790M787.5 93V98M788 94.5H793M790.5 92V97M792 89.5H797M794.5 87V92M796 83.5H801M798.5 81V86M799 82.5H804M801.5 80V85M803 84.5H808M805.5 82V87M807 79.5H812M809.5 77V82M811 77.5H816M813.5 75V80M814 75.5H819M816.5 73V78M818 75.5H823M820.5 73V78M823 72.5H828M825.5 70V75M825 68.5H830M827.5 66V71M829 71.5H834M831.5 69V74M833 71.5H838M835.5 69V74M837 69.5H842M839.5 67V72M841 69.5H846M843.5 67V72M844 69.5H849M846.5 67V72M848 67.5H853M850.5 65V70M851 69.5H856M853.5 67V72M855 67.5H860M857.5 65V70M859 66.5H864M861.5 64V69M863 67.5H868M865.5 65V70M866 67.5H871M868.5 65V70M870 67.5H875M872.5 65V70M874 65.5H879M876.5 63V68M878 63.5H883M880.5 61V66M881 60.5H886M883.5 58V63M885 59.5H890M887.5 57V62M889 35.5H894M891.5 33V38M893 54.5H898M895.5 52V57M896 67.5H901M898.5 65V70M900 71.5H905M902.5 69V74M904 74.5H909M906.5 72V77M907 76.5H912M909.5 74V79M911 79.5H916M913.5 77V82M915 81.5H920M917.5 79V84M918 82.5H923M920.5 80V85M922 85.5H927M924.5 83V88M926 86.5H931M928.5 84V89M930 80.5H935M932.5 78V83M933 84.5H938M935.5 82V87M937 84.5H942M939.5 82V87M941 88.5H946M943.5 86V91M944 87.5H949M946.5 85V90M948 100.5H953M950.5 98V103M952 96.5H957M954.5 94V99M956 112.5H961M958.5 110V115M959 122.5H964M961.5 120V125M963 128.5H968M965.5 126V131M967 135.5H972M969.5 133V138M971 151.5H976M973.5 149V154M974 159.5H979M976.5 157V162M978 175.5H983M980.5 173V178M982 185.5H987M984.5 183V188M989 214.5H994M991.5 212V217M1004 206.5H1009M1006.5 204V209" stroke="#8fb800" stroke-width="1" fill="none" shape-rendering="crispEdges"/>
<clipPath id="mapclip"><rect x="29.6" y="304.6" width="238" height="241.4"/></clipPath>
<g clip-path="url(#mapclip)">
<polyline points="30.2,323.1 32.58,321.36 35.8,321.3 38.43,320.71 40.42,321.84 42.6,322.6 42.64,325.12 44.8,327.6 45.94,327.44 49.3,327.6 50.57,327.77 53.9,329.9 55.95,329.92 57.46,327.7 60.6,327.6 63.16,327.52 65.1,325.3 67.55,323.55 70.78,321.21 71.9,320.8 74.12,318.5 73.77,316.28 75.52,316.16 76.57,313.8 78.7,311.8 80.73,309.92 82.21,307.6 82.74,306.37 85.5,305.5 88,303" fill="none" stroke="#0b2654" stroke-width="1.0" shape-rendering="crispEdges"/>
<polyline points="268,315 266.18,316.08 263.5,317.5 260.3,318.46 258,319 255,318.6 253.14,319.47 252.21,321.78 249.14,322.83 248,324 245.93,325.73 244.28,325.16 241.6,326.5 240.78,326.71 237.45,329.37 234.84,329.85 233.7,331 231.03,333.74 231.2,335.84 229,338 227.15,336.85 223.5,336.6 221.99,338.25 219.74,339.34 218.39,341.94 215.6,342.3 213.84,344.94 212.2,346.8 208.88,348.42 208.02,350.25 205.4,350.2 204.67,351.55 202.13,354.34 200.9,355.8 197.52,356.84 195.64,357.15 194.2,359.2 192.04,362.09 192,363.7 188.81,364.23 187.14,366.86 185.1,367.1 181.29,368.68 179.5,370.5 176.87,372.32 174,372.3 172.42,374.52 169.3,375 166.13,374.63 163.69,375.59 161.4,374.5 161.03,372 157.69,370.52 157,369.5 154.86,367.46 154,365.5 151.71,366.08 149,367.8 145.81,369.64 144.69,372.03 143,373.9 142.69,376.06 140.24,377.58 139.22,377.93 137.4,380.7 137.99,384.01 137.57,386.68 136.3,388.6 134.14,389.86 131.55,391.92 130.6,393.1 127.85,394.04 126.5,396.24 125.12,397.95 123.8,401 120.35,402.41 119.3,405.5 117.22,407.15 115.91,410.35 116.2,410.58 114.8,413.4 114.81,415.53 116,418.4 114.44,419.93 114.37,424.45 112.3,425.7 109.82,427.29 106.51,428.01 105.1,430.6 102.9,431.56 102.24,432.84 98.48,436.26 97.8,436.7 96.23,434.22 94.64,432.3 92.9,431.8 90.53,433.35 88.91,433.07 85.6,433 83.43,434.71 81.6,437.72 80.8,439.1 78.01,440.17 74.66,439.24 72.2,440.3 72.35,443.91 71,445.2 70.39,447.87 68.84,449.66 65.96,451.06 64.81,451.83 63.7,454.9 61.13,456.31 60.24,459.24 60.48,460.59 58.99,463.83 56.5,464.6 56.13,465.98 52.91,467.34 51.39,468.99 50.96,472.36 49.2,473.1 48.19,474.58 45.92,476.87 42.73,478.06 41.9,479.2 41.06,481.4 38.85,482.2 35.65,484.47 34.6,485.3 32.97,488.15 33.28,489.3 30.69,492.75 29.7,493.8" fill="none" stroke="#0b2654" stroke-width="1.0" shape-rendering="crispEdges"/>
<polyline points="43.1,546 43.94,542.48 42.8,539.71 44.97,538.56 44.3,535.1 45.28,534.06 49.1,531.83 49.42,529.74 51.6,527.8 52.35,524.2 56,523.29 56.5,520.5 58.96,519.91 61.14,518.13 63.7,515.6 66.12,512.91 66.37,511.1 68.6,509.6 70.4,509.48 72.87,508.76 74.99,509.61 78.3,508.3 80.37,508.2 83.35,509.27 85.38,509.3 88,508.3 90.45,506.58 92.9,504.7 95.38,504.34 97.61,505.54 98.98,507.82 102.6,507.9 104.24,507.34 107.99,507.04 109.46,506.44 112.3,505.9 114.88,507.18 116.25,507.24 119.05,507.16 122.1,508.3 124.58,509.84 125.9,511.97 128.56,512.74 129.4,514.4 132.07,514.01 134.23,514.06 136.6,513.2 138.94,512.68 141.5,512 144.35,514.26 147.3,514.4 149.41,513.3 151.63,509.82 152.2,508.4 154.52,508.48 157.38,505.57 157.83,505.32 159.89,503.86 163.1,503.5 164.51,502.71 168.65,502.05 170.4,499.9 171.6,499.19 174.85,496.58 176.5,496.2 179.84,496.85 180.68,496.34 183.53,494.74 186.2,494.3 189.78,493.65 191,491.4 189.79,488.8 190.24,486.15 189.8,484.1 186.67,481.46 185,479.7 183.08,476.85 180.1,476.3" fill="none" stroke="#0b2654" stroke-width="1.0" shape-rendering="crispEdges"/>
<polyline points="155.8,546 157.15,543.64 157.08,541.16 159.75,539.38 159.62,538.3 162.58,536.05 163.1,532.7 163.78,530.1 165.26,529.3 168,526.6 169.85,526.91 172.8,529 175.66,528.79 178.9,526.6 181.07,524.12 180.86,523.81 183.27,521.38 184.5,519 184.36,515.04 186.2,513.2 187,510" fill="none" stroke="#0b2654" stroke-width="1.0" shape-rendering="crispEdges"/>
<polyline points="208.1,459.8 210.15,461.62 210.27,464.85 212.9,465.8 214.86,468.56 215.17,470.72 217.8,471.9 217.61,475.57 219.5,477.5 218.72,479.28 218.29,482.86 217.5,484 215.89,485.56 215.4,488.9 214.26,490.82 213,494 209.61,493.94 208.1,495.5" fill="none" stroke="#0b2654" stroke-width="1.0" shape-rendering="crispEdges"/>
<polyline points="202,510.8 201.5,514 204.4,516.9 205.12,517.73 208,520 210,520.38 212.9,521.7 215.96,521.56 217.78,521.65 219.85,521.62 222.06,521.98 225.1,523.5 227.78,525 228.6,526.19 232.52,526.68 233.6,529 235.83,530.84 236.52,533.8 238,535 239.79,536.92 242.1,538.8 243.35,542.36 243.32,544.4 244.5,546" fill="none" stroke="#0b2654" stroke-width="1.0" shape-rendering="crispEdges"/>
<polyline points="256.2,431.1 256.86,434.09 256.3,436.07 256.7,439.1" fill="none" stroke="#0b2654" stroke-width="1.0" shape-rendering="crispEdges"/>
<polyline points="29.6,439.8 170,440.3 215,440.1 256.7,439.8 259,437.5 266.4,435.4 268.5,434.5" fill="none" stroke="#44260a" stroke-width="1.0" shape-rendering="crispEdges"/>
<polyline points="76.4,439.8 94.6,546" fill="none" stroke="#44260a" stroke-width="1.0" shape-rendering="crispEdges"/>
<polyline points="169.6,440.3 169.22,436.7 169.3,434.07 169.8,430.6 169.79,426.8 169.85,424.01 170.5,420.2 173.12,418.32 175,416.1 179.5,417.9 183.23,417.09 187.4,416.8 187.96,413.36 188.59,409.95 189.7,406.6 191.11,404.26 193,401 196.87,398.2 199.8,395.3 202.18,394.27 204.88,392.16 207.7,390.8 210.97,390.31 215.21,390.07 219,389.7 223.5,390.8 226.23,388.94 229.07,386.83 232.6,385.2 235.19,383.6 238.14,381.72 241.6,380.7 243.65,378.43 246.19,376.73 248.6,374.86 250.6,372.7 253.82,372.18 256.49,370.73 259.6,370 265.3,369.4 268.5,365.5" fill="none" stroke="#44260a" stroke-width="1.0" shape-rendering="crispEdges"/>
<polyline points="256.7,439.6 254.73,442.65 251.8,446.4 249.59,449.38 246.48,452.4 244.5,454.9 242.86,458.26 240.67,461.68 238.4,464.6 240.91,467.06 244.14,469.8 247,471.9 250.3,473.43 253,474.3" fill="none" stroke="#44260a" stroke-width="1.0" shape-rendering="crispEdges"/>
<path d="M36 352.4h1M43.05 352.4h1M50.1 352.4h1M57.15 352.4h1M64.2 352.4h1M71.25 352.4h1M78.3 352.4h1M85.35 352.4h1M92.4 352.4h1M99.45 352.4h1M106.5 352.4h1M113.55 352.4h1M120.6 352.4h1M127.65 352.4h1M134.7 352.4h1M141.75 352.4h1M148.8 352.4h1M155.85 352.4h1M162.9 352.4h1M169.95 352.4h1M177 352.4h1M184.05 352.4h1M191.1 352.4h1M198.15 352.4h1M205.2 352.4h1M212.25 352.4h1M219.3 352.4h1M226.35 352.4h1M233.4 352.4h1M240.45 352.4h1M247.5 352.4h1M254.55 352.4h1M261.6 352.4h1M36 439.6h1M43.05 439.6h1M50.1 439.6h1M57.15 439.6h1M64.2 439.6h1M71.25 439.6h1M78.3 439.6h1M85.35 439.6h1M92.4 439.6h1M99.45 439.6h1M106.5 439.6h1M113.55 439.6h1M120.6 439.6h1M127.65 439.6h1M134.7 439.6h1M141.75 439.6h1M148.8 439.6h1M155.85 439.6h1M162.9 439.6h1M169.95 439.6h1M177 439.6h1M184.05 439.6h1M191.1 439.6h1M198.15 439.6h1M205.2 439.6h1M212.25 439.6h1M219.3 439.6h1M226.35 439.6h1M233.4 439.6h1M240.45 439.6h1M247.5 439.6h1M254.55 439.6h1M261.6 439.6h1M36 526.6h1M43.05 526.6h1M50.1 526.6h1M57.15 526.6h1M64.2 526.6h1M71.25 526.6h1M78.3 526.6h1M85.35 526.6h1M92.4 526.6h1M99.45 526.6h1M106.5 526.6h1M113.55 526.6h1M120.6 526.6h1M127.65 526.6h1M134.7 526.6h1M141.75 526.6h1M148.8 526.6h1M155.85 526.6h1M162.9 526.6h1M169.95 526.6h1M177 526.6h1M184.05 526.6h1M191.1 526.6h1M198.15 526.6h1M205.2 526.6h1M212.25 526.6h1M219.3 526.6h1M226.35 526.6h1M233.4 526.6h1M240.45 526.6h1M247.5 526.6h1M254.55 526.6h1M261.6 526.6h1M50.05 309h1M49.94 317.75h1M49.83 326.5h1M49.71 335.25h1M49.6 344h1M49.49 352.75h1M49.38 361.5h1M49.26 370.25h1M49.15 379h1M49.04 387.75h1M48.93 396.5h1M48.81 405.25h1M48.7 414h1M48.59 422.75h1M48.48 431.5h1M48.36 440.25h1M48.25 449h1M48.14 457.75h1M48.03 466.5h1M47.91 475.25h1M47.8 484h1M47.69 492.75h1M47.58 501.5h1M47.47 510.25h1M47.35 519h1M47.24 527.75h1M47.13 536.5h1M47.02 545.25h1M120.19 309h1M120.16 317.75h1M120.14 326.5h1M120.11 335.25h1M120.09 344h1M120.06 352.75h1M120.04 361.5h1M120.01 370.25h1M119.99 379h1M119.96 387.75h1M119.93 396.5h1M119.91 405.25h1M119.88 414h1M119.86 422.75h1M119.83 431.5h1M119.81 440.25h1M119.78 449h1M119.76 457.75h1M119.73 466.5h1M119.71 475.25h1M119.68 484h1M119.66 492.75h1M119.63 501.5h1M119.61 510.25h1M119.58 519h1M119.55 527.75h1M119.53 536.5h1M119.5 545.25h1M191.04 309h1M191.12 317.75h1M191.2 326.5h1M191.29 335.25h1M191.37 344h1M191.45 352.75h1M191.54 361.5h1M191.62 370.25h1M191.7 379h1M191.79 387.75h1M191.87 396.5h1M191.95 405.25h1M192.04 414h1M192.12 422.75h1M192.2 431.5h1M192.29 440.25h1M192.37 449h1M192.45 457.75h1M192.54 466.5h1M192.62 475.25h1M192.7 484h1M192.79 492.75h1M192.87 501.5h1M192.95 510.25h1M193.04 519h1M193.12 527.75h1M193.2 536.5h1M193.29 545.25h1M261.57 309h1M261.73 317.75h1M261.88 326.5h1M262.04 335.25h1M262.19 344h1M262.35 352.75h1M262.5 361.5h1M262.66 370.25h1M262.82 379h1M262.97 387.75h1M263.13 396.5h1M263.28 405.25h1M263.44 414h1M263.6 422.75h1M263.75 431.5h1M263.91 440.25h1M264.06 449h1M264.22 457.75h1M264.37 466.5h1M264.53 475.25h1M264.69 484h1M264.84 492.75h1M265 501.5h1M265.15 510.25h1M265.31 519h1M265.47 527.75h1M265.62 536.5h1M265.78 545.25h1" stroke="#707a66" stroke-width="1" fill="none"/>
<polyline points="185.62,507.92 189.01,507.92 189.01,505.57 192.14,505.57 192.14,503.23 195.52,503.23 195.52,500.62 197.08,500.62 197.08,499.06 195,499.06 195,497.11 193.44,497.11 193.44,494.11 194.48,494.11 194.48,491.25 193.7,491.25 193.7,487.99 195.52,487.99 195.52,486.69 196.56,486.69 196.56,490.21 197.6,490.21 197.6,493.2 199.43,493.2 199.43,491.25 200.73,491.25 200.73,487.86 202.29,487.86 202.29,491.25 203.33,491.25 203.33,493.33 204.38,493.33 204.38,494.38 207.76,494.38 206.46,496.46 204.11,499.06 202.55,501.41 200.73,503.75 199.43,505.83 197.86,507.92 196.56,510 196.04,511.56 192.92,511.56 192.92,512.6 190.57,512.6 190.57,513.65 187.97,513.65 187.97,510.52 186.67,510.52 186.67,508.96 185.62,508.96 185.62,507.92" fill="none" stroke="#8c8c8c" stroke-width="0.9" shape-rendering="crispEdges"/>
<polyline points="197.08,499.06 198.91,499.06 198.91,501.41 200.73,501.41 200.73,499.06 202.55,499.06 202.55,496.98 204.64,496.98 204.64,494.64" fill="none" stroke="#8c8c8c" stroke-width="0.9" shape-rendering="crispEdges"/>
<polyline points="195,497.11 197.86,497.11 197.86,495.16 199.43,495.16 199.43,493.2" fill="none" stroke="#8c8c8c" stroke-width="0.9" shape-rendering="crispEdges"/>
<polyline points="195.52,503.23 197.86,503.23 197.86,505.05 199.43,505.05" fill="none" stroke="#8c8c8c" stroke-width="0.9" shape-rendering="crispEdges"/>
<polyline points="252.29,474.06 254.11,474.06 254.11,475.89 256.46,475.89 256.46,477.71 258.8,477.71 258.8,480.05 260.36,480.05 260.36,482.4 261.93,482.4 261.93,483.96 266.61,483.96 266.61,487.6 264.01,487.6 264.01,486.04 261.15,486.04 261.15,484.74 259.06,484.74 259.06,482.4 256.98,482.4 256.98,480.31 254.9,480.31 254.9,478.23 253.07,478.23 253.07,476.15 252.29,476.15 252.29,474.06" fill="none" stroke="#8c8c8c" stroke-width="0.9" shape-rendering="crispEdges"/>
<polyline points="89,306 92,304.8 95,307.5 97,305" fill="none" stroke="#8c8c8c" stroke-width="0.9" shape-rendering="crispEdges"/>
<polyline points="104,305 106,310 107.5,305" fill="none" stroke="#8c8c8c" stroke-width="0.9" shape-rendering="crispEdges"/>
<polyline points="138.2,438.6 146,439 152,440.3 158,441 165,442.3 172,443.5" fill="none" stroke="#ee7a36" stroke-width="1.1" shape-rendering="crispEdges"/>
<polyline points="139,438.6 146,438.2 148,439.6" fill="none" stroke="#ee7a36" stroke-width="0.9" shape-rendering="crispEdges"/>
<polyline points="143,441.2 145,441.4" fill="none" stroke="#ee7a36" stroke-width="0.9" shape-rendering="crispEdges"/>
</g>
<rect x="29.5" y="304.5" width="238" height="242" fill="none" stroke="#343434" shape-rendering="crispEdges"/>
<path d="M38.5 411.5H46.5M42.5 407.5V415.5" stroke="#5f9ea0" stroke-width="1.0" fill="none" shape-rendering="crispEdges"/>
<text transform="translate(41.9,403.6) scale(0.8,1)" font-size="8.6" fill="#a0a0a0" text-anchor="middle" >03</text>
<path d="M94.5 453.5H102.5M98.5 449.5V457.5" stroke="#8fb800" stroke-width="1.0" fill="none" shape-rendering="crispEdges"/>
<text transform="translate(98,445.5) scale(0.8,1)" font-size="8.6" fill="#a0a0a0" text-anchor="middle" >02</text>
<path d="M133.5 506.5H141.5M137.5 502.5V510.5" stroke="#9966cc" stroke-width="1.0" fill="none" shape-rendering="crispEdges"/>
<text transform="translate(137.2,498.2) scale(0.8,1)" font-size="8.6" fill="#a0a0a0" text-anchor="middle" >04</text>
<path d="M184.5 482.5H192.5M188.5 478.5V486.5" stroke="#5a5a5a" stroke-width="1.0" fill="none" shape-rendering="crispEdges"/>
<text transform="translate(188.4,474.2) scale(0.8,1)" font-size="8.6" fill="#a0a0a0" text-anchor="middle" >08</text>
<text transform="translate(47.6,555.9) scale(0.82,1)" font-size="10.4" fill="#b4b4b4" text-anchor="middle" >-86</text>
<text transform="translate(120.3,555.9) scale(0.82,1)" font-size="10.4" fill="#b4b4b4" text-anchor="middle" >-85</text>
<text transform="translate(193,555.9) scale(0.82,1)" font-size="10.4" fill="#b4b4b4" text-anchor="middle" >-84</text>
<text transform="translate(26.8,352.4) rotate(-90) scale(0.82,1)" font-size="10.4" fill="#b4b4b4" text-anchor="middle" >36</text>
<text transform="translate(26.8,439.6) rotate(-90) scale(0.82,1)" font-size="10.4" fill="#b4b4b4" text-anchor="middle" >35</text>
<text transform="translate(26.8,526.6) rotate(-90) scale(0.82,1)" font-size="10.4" fill="#b4b4b4" text-anchor="middle" >34</text>
<text transform="translate(14.8,437.8) rotate(-90) scale(0.9,1)" font-size="13.0" fill="#e6e6e6" text-anchor="middle" >Latitude [deg]</text>
<text transform="translate(148.3,568.8) scale(0.9,1)" font-size="13.0" fill="#e6e6e6" text-anchor="middle" >Longitude [deg]</text>
<text transform="translate(4,572) scale(0.95,1)" font-size="6" fill="#1d1d1d" text-anchor="start" >rjw</text>
<clipPath id="orbclip"><rect x="280.5" y="304.6" width="263.1" height="252.6"/></clipPath>
<g clip-path="url(#orbclip)">
<ellipse cx="407.7" cy="441.0" rx="138.2" ry="138.2" fill="none" stroke="#8a8a52" stroke-width="1" shape-rendering="crispEdges"/>
<ellipse cx="411.9" cy="437.2" rx="40.2" ry="40.2" fill="none" stroke="#8a8a52" stroke-width="1" shape-rendering="crispEdges"/>
<ellipse cx="415.25" cy="440.15" rx="26.85" ry="26.75" fill="none" stroke="#8a8a52" stroke-width="1" shape-rendering="crispEdges"/>
<ellipse cx="415.5" cy="439.3" rx="18.5" ry="19.0" fill="none" stroke="#8a8a52" stroke-width="1" shape-rendering="crispEdges"/>
<ellipse cx="414.7" cy="441.7" rx="9.35" ry="10.1" fill="none" stroke="#8a8a52" stroke-width="1" shape-rendering="crispEdges"/>
<ellipse cx="415.0" cy="464.4" rx="40.6" ry="48.0" fill="none" stroke="#4f96aa" stroke-width="1" shape-rendering="crispEdges"/>
<circle cx="454.5" cy="310.6" r="2.6" fill="#7d8264"/>
<circle cx="422.2" cy="399.4" r="2.6" fill="#7d8264"/>
<circle cx="415.5" cy="450.7" r="2.6" fill="#7d8264"/>
<circle cx="426.5" cy="453.4" r="2.6" fill="#7d8264"/>
<circle cx="435.6" cy="423.3" r="2.7" fill="#0a6cff"/>
<circle cx="414.6" cy="438.7" r="3.7" fill="#fff200"/>
</g>
<rect x="280.5" y="304.5" width="263" height="253" fill="none" stroke="#343434" shape-rendering="crispEdges"/>
<text transform="translate(543,315.8)" font-size="13.33" fill="#e6e6e6" text-anchor="end" >T_j 3.87</text>
<text transform="translate(414.3,569.6) scale(0.9,1)" font-size="13.0" fill="#e6e6e6" text-anchor="middle" >Orbital Position [AU]</text>
<line x1="599.5" y1="303.8" x2="599.5" y2="407.9" stroke="#2b2b2b" stroke-width="1"  shape-rendering="crispEdges"/>
<line x1="640.5" y1="303.8" x2="640.5" y2="407.9" stroke="#2b2b2b" stroke-width="1"  shape-rendering="crispEdges"/>
<line x1="680.5" y1="303.8" x2="680.5" y2="407.9" stroke="#2b2b2b" stroke-width="1"  shape-rendering="crispEdges"/>
<line x1="721.5" y1="303.8" x2="721.5" y2="407.9" stroke="#2b2b2b" stroke-width="1"  shape-rendering="crispEdges"/>
<line x1="762.5" y1="303.8" x2="762.5" y2="407.9" stroke="#2b2b2b" stroke-width="1"  shape-rendering="crispEdges"/>
<line x1="803.5" y1="303.8" x2="803.5" y2="407.9" stroke="#2b2b2b" stroke-width="1"  shape-rendering="crispEdges"/>
<line x1="843.5" y1="303.8" x2="843.5" y2="407.9" stroke="#2b2b2b" stroke-width="1"  shape-rendering="crispEdges"/>
<line x1="884.5" y1="303.8" x2="884.5" y2="407.9" stroke="#2b2b2b" stroke-width="1"  shape-rendering="crispEdges"/>
<line x1="925.5" y1="303.8" x2="925.5" y2="407.9" stroke="#2b2b2b" stroke-width="1"  shape-rendering="crispEdges"/>
<line x1="965.5" y1="303.8" x2="965.5" y2="407.9" stroke="#2b2b2b" stroke-width="1"  shape-rendering="crispEdges"/>
<line x1="1006.5" y1="303.8" x2="1006.5" y2="407.9" stroke="#2b2b2b" stroke-width="1"  shape-rendering="crispEdges"/>
<line x1="586.5" y1="303.5" x2="1020.8" y2="303.5" stroke="#2b2b2b" stroke-width="1"  shape-rendering="crispEdges"/>
<line x1="586.5" y1="313.5" x2="1020.8" y2="313.5" stroke="#2b2b2b" stroke-width="1"  shape-rendering="crispEdges"/>
<line x1="586.5" y1="322.5" x2="1020.8" y2="322.5" stroke="#2b2b2b" stroke-width="1"  shape-rendering="crispEdges"/>
<line x1="586.5" y1="332.5" x2="1020.8" y2="332.5" stroke="#2b2b2b" stroke-width="1"  shape-rendering="crispEdges"/>
<line x1="581.8" y1="341.5" x2="1020.8" y2="341.5" stroke="#2b2b2b" stroke-width="1"  shape-rendering="crispEdges"/>
<text transform="translate(579.4,341.5) rotate(-90) scale(0.82,1)" font-size="10.4" fill="#b4b4b4" text-anchor="middle" >-0.00</text>
<line x1="586.5" y1="350.5" x2="1020.8" y2="350.5" stroke="#2b2b2b" stroke-width="1"  shape-rendering="crispEdges"/>
<line x1="586.5" y1="360.5" x2="1020.8" y2="360.5" stroke="#2b2b2b" stroke-width="1"  shape-rendering="crispEdges"/>
<line x1="586.5" y1="369.5" x2="1020.8" y2="369.5" stroke="#2b2b2b" stroke-width="1"  shape-rendering="crispEdges"/>
<line x1="581.8" y1="379.5" x2="1020.8" y2="379.5" stroke="#2b2b2b" stroke-width="1"  shape-rendering="crispEdges"/>
<text transform="translate(579.4,379.1) rotate(-90) scale(0.82,1)" font-size="10.4" fill="#b4b4b4" text-anchor="middle" >-0.36</text>
<line x1="586.5" y1="388.5" x2="1020.8" y2="388.5" stroke="#2b2b2b" stroke-width="1"  shape-rendering="crispEdges"/>
<line x1="586.5" y1="397.5" x2="1020.8" y2="397.5" stroke="#2b2b2b" stroke-width="1"  shape-rendering="crispEdges"/>
<rect x="586.5" y="303.5" width="434" height="100" fill="none" stroke="#343434" shape-rendering="crispEdges"/>
<line x1="586.5" y1="341.5" x2="1024" y2="341.5" stroke="#ffffff" stroke-width="1.2"  shape-rendering="crispEdges"/>
<text transform="translate(599.45,418.8) scale(0.82,1)" font-size="10.4" fill="#b4b4b4" text-anchor="middle" >-0</text>
<text transform="translate(640.16,418.8) scale(0.82,1)" font-size="10.4" fill="#b4b4b4" text-anchor="middle" >6</text>
<text transform="translate(680.87,418.8) scale(0.82,1)" font-size="10.4" fill="#b4b4b4" text-anchor="middle" >12</text>
<text transform="translate(721.58,418.8) scale(0.82,1)" font-size="10.4" fill="#b4b4b4" text-anchor="middle" >18</text>
<text transform="translate(762.29,418.8) scale(0.82,1)" font-size="10.4" fill="#b4b4b4" text-anchor="middle" >24</text>
<text transform="translate(803,418.8) scale(0.82,1)" font-size="10.4" fill="#b4b4b4" text-anchor="middle" >29</text>
<text transform="translate(843.71,418.8) scale(0.82,1)" font-size="10.4" fill="#b4b4b4" text-anchor="middle" >35</text>
<text transform="translate(884.42,418.8) scale(0.82,1)" font-size="10.4" fill="#b4b4b4" text-anchor="middle" >41</text>
<text transform="translate(925.13,418.8) scale(0.82,1)" font-size="10.4" fill="#b4b4b4" text-anchor="middle" >47</text>
<text transform="translate(965.84,418.8) scale(0.82,1)" font-size="10.4" fill="#b4b4b4" text-anchor="middle" >53</text>
<text transform="translate(1006.55,418.8) scale(0.82,1)" font-size="10.4" fill="#b4b4b4" text-anchor="middle" >59</text>
<text transform="translate(567.3,352.2) rotate(-90) scale(0.9,1)" font-size="13.0" fill="#e6e6e6" text-anchor="middle" >Horz Res [km]</text>
<text transform="translate(803,430.8) scale(0.9,1)" font-size="13.0" fill="#e6e6e6" text-anchor="middle" >Length Along Trail [km]</text>
<path d="M616.5 339V341.5M670.5 343.3V341.5M677.5 342.8V341.5M684.5 343.7V341.5M692.5 347.1V341.5M697.5 343.7V341.5M704.5 343.7V341.5M706.5 344.2V341.5M721.5 341.6V341.5M726.5 343.3V341.5M730.5 341.6V341.5M732.5 342.8V341.5M737.5 344.2V341.5M740.5 339.8V341.5M744.5 341.1V341.5M756.5 343.97V341.5M760.5 342.37V341.5M764.5 342.53V341.5M768.5 345.17V341.5M774.5 344.77V341.5M782.5 342.26V341.5M786.5 344.1V341.5M790.5 343.67V341.5M792.5 343.56V341.5M795.5 345.08V341.5M799.5 342.39V341.5M803.5 344.49V341.5M806.5 344.69V341.5M810.5 342.85V341.5M814.5 342.84V341.5M818.5 343.57V341.5M822.5 342.35V341.5M827.5 343.02V341.5M829.5 344.12V341.5M832.5 344.02V341.5M835.5 344.18V341.5M838.5 344.09V341.5M841.5 343.64V341.5M844.5 345.21V341.5M847.5 342.8V341.5M850.5 344.37V341.5M853.5 343.59V341.5M857.5 345.28V341.5M861.5 343.1V341.5M863.5 343.61V341.5M866.5 342.34V341.5M869.5 345.28V341.5M874.5 343.34V341.5M878.5 345.08V341.5M881.5 342.39V341.5M885.5 342.94V341.5M888.5 344.03V341.5M891.5 342.99V341.5M894.5 343.27V341.5M897.5 344.9V341.5M901.5 342.61V341.5M905.5 344.28V341.5M908.5 344.43V341.5M911.5 343.3V341.5M914.5 343.16V341.5M917.5 343.18V341.5M920.5 345.11V341.5M923.5 342.14V341.5M927.5 342.91V341.5M929.5 343.35V341.5M933.5 342.34V341.5M938.5 344.52V341.5M942.5 343V341.5M944.5 344.22V341.5M948.5 342.58V341.5M953.5 343.5V341.5M955.5 344.57V341.5M960.5 343.47V341.5M962.5 344.54V341.5M965.5 344.9V341.5M969.5 342.75V341.5M971.5 345.09V341.5M974.5 344.07V341.5M977.5 344.88V341.5M980.5 345.02V341.5M984.5 342.65V341.5M987.5 343V341.5M990.5 344.46V341.5M993.5 343.4V341.5M1005.5 347.5V341.5" stroke="#5a7400" stroke-width="1" fill="none" shape-rendering="crispEdges"/>
<path d="M614 336h5v5h-5zM668 341h5v5h-5zM675 340h5v5h-5zM682 341h5v5h-5zM690 345h5v5h-5zM695 341h5v5h-5zM702 341h5v5h-5zM704 342h5v5h-5zM719 339h5v5h-5zM724 341h5v5h-5zM728 339h5v5h-5zM730 340h5v5h-5zM735 342h5v5h-5zM738 337h5v5h-5zM742 339h5v5h-5zM754 341h5v5h-5zM758 340h5v5h-5zM762 340h5v5h-5zM766 343h5v5h-5zM772 342h5v5h-5zM780 340h5v5h-5zM784 342h5v5h-5zM788 341h5v5h-5zM790 341h5v5h-5zM793 343h5v5h-5zM797 340h5v5h-5zM801 342h5v5h-5zM804 342h5v5h-5zM808 340h5v5h-5zM812 340h5v5h-5zM816 341h5v5h-5zM820 340h5v5h-5zM825 341h5v5h-5zM827 342h5v5h-5zM830 342h5v5h-5zM833 342h5v5h-5zM836 342h5v5h-5zM839 341h5v5h-5zM842 343h5v5h-5zM845 340h5v5h-5zM848 342h5v5h-5zM851 341h5v5h-5zM855 343h5v5h-5zM859 341h5v5h-5zM861 341h5v5h-5zM864 340h5v5h-5zM867 343h5v5h-5zM872 341h5v5h-5zM876 343h5v5h-5zM879 340h5v5h-5zM883 340h5v5h-5zM886 342h5v5h-5zM889 340h5v5h-5zM892 341h5v5h-5zM895 342h5v5h-5zM899 340h5v5h-5zM903 342h5v5h-5zM906 342h5v5h-5zM909 341h5v5h-5zM912 341h5v5h-5zM915 341h5v5h-5zM918 343h5v5h-5zM921 340h5v5h-5zM925 340h5v5h-5zM927 341h5v5h-5zM931 340h5v5h-5zM936 342h5v5h-5zM940 340h5v5h-5zM942 342h5v5h-5zM946 340h5v5h-5zM951 341h5v5h-5zM953 342h5v5h-5zM958 341h5v5h-5zM960 342h5v5h-5zM963 342h5v5h-5zM967 340h5v5h-5zM969 343h5v5h-5zM972 342h5v5h-5zM975 342h5v5h-5zM978 343h5v5h-5zM982 340h5v5h-5zM985 341h5v5h-5zM988 342h5v5h-5zM991 341h5v5h-5zM1003 345h5v5h-5z" fill="#8fb800" shape-rendering="crispEdges"/>
<path d="M800.5 400.1V341.5M814.5 393.5V341.5M821.5 377.2V341.5M824.5 359.3V341.5M825.5 372.3V341.5M838.5 373.2V341.5M843.5 320.2V341.5M843.5 370.2V341.5M847.5 376.3V341.5M852.5 355.3V341.5M854.5 335.3V341.5M864.5 338.5V341.5M865.5 345.4V341.5M865.5 399.2V341.5M883.5 354.1V341.5M883.5 357.6V341.5M885.5 364.5V341.5M887.5 350.6V341.5M887.5 353.6V341.5M818.5 341.6V341.5M829.5 342.8V341.5M895.5 383.2V341.5M904.5 339.3V341.5M906.5 383.2V341.5M907.5 349.2V341.5M908.5 367.3V341.5M920.5 362.2V341.5M922.5 345.4V341.5M926.5 355.3V341.5M930.5 355.3V341.5M940.5 332.6V341.5M941.5 361.4V341.5M946.5 355.3V341.5M946.5 369.2V341.5M947.5 390.5V341.5M956.5 325.4V341.5M956.5 376.3V341.5M958.5 343.7V341.5M969.5 360.2V341.5M971.5 349.2V341.5M973.5 337.6V341.5M976.5 328.4V341.5M976.5 331.5V341.5M987.5 343.7V341.5M990.5 345.4V341.5M989.5 307.6V341.5M995.5 339.3V341.5M1000.5 316.4V341.5M1001.5 359.3V341.5M1002.5 328.4V341.5M1006.5 327.5V341.5M1006.5 352.3V341.5" stroke="#3a6566" stroke-width="1" fill="none" shape-rendering="crispEdges"/>
<path d="M798 398h5v5h-5zM812 391h5v5h-5zM819 375h5v5h-5zM822 357h5v5h-5zM823 370h5v5h-5zM836 371h5v5h-5zM841 318h5v5h-5zM841 368h5v5h-5zM845 374h5v5h-5zM850 353h5v5h-5zM852 333h5v5h-5zM862 336h5v5h-5zM863 343h5v5h-5zM863 397h5v5h-5zM881 352h5v5h-5zM881 355h5v5h-5zM883 362h5v5h-5zM885 348h5v5h-5zM885 351h5v5h-5zM816 339h5v5h-5zM827 340h5v5h-5zM893 381h5v5h-5zM902 337h5v5h-5zM904 381h5v5h-5zM905 347h5v5h-5zM906 365h5v5h-5zM918 360h5v5h-5zM920 343h5v5h-5zM924 353h5v5h-5zM928 353h5v5h-5zM938 330h5v5h-5zM939 359h5v5h-5zM944 353h5v5h-5zM944 367h5v5h-5zM945 388h5v5h-5zM954 323h5v5h-5zM954 374h5v5h-5zM956 341h5v5h-5zM967 358h5v5h-5zM969 347h5v5h-5zM971 335h5v5h-5zM974 326h5v5h-5zM974 329h5v5h-5zM985 341h5v5h-5zM988 343h5v5h-5zM987 305h5v5h-5zM993 337h5v5h-5zM998 314h5v5h-5zM999 357h5v5h-5zM1000 326h5v5h-5zM1004 325h5v5h-5zM1004 350h5v5h-5z" fill="#5f9ea0" shape-rendering="crispEdges"/>
<path d="M599.5 345.4V341.5M600.5 353.4V341.5M617.5 344.2V341.5M629.5 344.2V341.5M634.5 326.5V341.5M641.5 358.4V341.5M644.5 330.3V341.5M650.5 334.5V341.5M654.5 341.6V341.5M653.5 344.2V341.5M661.5 336.4V341.5M666.5 341.6V341.5M671.5 328.4V341.5M672.5 343.3V341.5M676.5 333.4V341.5M681.5 342.5V341.5M686.5 339.3V341.5M689.5 344.2V341.5M696.5 338.5V341.5M698.5 317.6V341.5M703.5 337.6V341.5M707.5 331.5V341.5M711.5 341.6V341.5M716.5 335.3V341.5M717.5 331.5V341.5M722.5 315.4V341.5M725.5 342.8V341.5M734.5 346.6V341.5M737.5 324.6V341.5M739.5 343.3V341.5M745.5 338.5V341.5M749.5 346.3V341.5M752.5 325.4V341.5M757.5 325.4V341.5M760.5 334.5V341.5M766.5 332.7V341.5M769.5 333.2V341.5M774.5 335.3V341.5M777.5 347.5V341.5M781.5 336.4V341.5M787.5 331.5V341.5M792.5 324.6V341.5M793.5 330.3V341.5M797.5 327.5V341.5M799.5 331.5V341.5M805.5 326.5V341.5M812.5 331.5V341.5M818.5 335.3V341.5M820.5 335.3V341.5M823.5 329.4V341.5M829.5 324.6V341.5M829.5 335.3V341.5M835.5 326.5V341.5M840.5 332.6V341.5M844.5 325.4V341.5M846.5 326.5V341.5M852.5 333.4V341.5M853.5 340.5V341.5M859.5 347.5V341.5M865.5 329.4V341.5M867.5 324.6V341.5M872.5 325.4V341.5M876.5 326.5V341.5M878.5 324.6V341.5M883.5 324.6V341.5M886.5 342.8V341.5M894.5 329.4V341.5M895.5 335.9V341.5M896.5 327.5V341.5M896.5 336.4V341.5M901.5 342.8V341.5M907.5 324.6V341.5M909.5 323.7V341.5M913.5 327.5V341.5M917.5 321.1V341.5M921.5 319.4V341.5M927.5 342.8V341.5M930.5 321.1V341.5M934.5 334.5V341.5M935.5 328.4V341.5M940.5 324.6V341.5M941.5 337.6V341.5M946.5 322V341.5M947.5 318.5V341.5M953.5 328.4V341.5M955.5 347.5V341.5M960.5 337.6V341.5M962.5 336.4V341.5M968.5 323.7V341.5M968.5 330.3V341.5M972.5 325.4V341.5M974.5 326.5V341.5M975.5 337.6V341.5M983.5 333.4V341.5M986.5 326.5V341.5M986.5 339.3V341.5M989.5 324.6V341.5M992.5 333.4V341.5M993.5 324.6V341.5M997.5 324.6V341.5M999.5 338.5V341.5" stroke="#5e3f80" stroke-width="1" fill="none" shape-rendering="crispEdges"/>
<path d="M597 343h5v5h-5zM598 351h5v5h-5zM615 342h5v5h-5zM627 342h5v5h-5zM632 324h5v5h-5zM639 356h5v5h-5zM642 328h5v5h-5zM648 332h5v5h-5zM652 339h5v5h-5zM651 342h5v5h-5zM659 334h5v5h-5zM664 339h5v5h-5zM669 326h5v5h-5zM670 341h5v5h-5zM674 331h5v5h-5zM679 340h5v5h-5zM684 337h5v5h-5zM687 342h5v5h-5zM694 336h5v5h-5zM696 315h5v5h-5zM701 335h5v5h-5zM705 329h5v5h-5zM709 339h5v5h-5zM714 333h5v5h-5zM715 329h5v5h-5zM720 313h5v5h-5zM723 340h5v5h-5zM732 344h5v5h-5zM735 322h5v5h-5zM737 341h5v5h-5zM743 336h5v5h-5zM747 344h5v5h-5zM750 323h5v5h-5zM755 323h5v5h-5zM758 332h5v5h-5zM764 330h5v5h-5zM767 331h5v5h-5zM772 333h5v5h-5zM775 345h5v5h-5zM779 334h5v5h-5zM785 329h5v5h-5zM790 322h5v5h-5zM791 328h5v5h-5zM795 325h5v5h-5zM797 329h5v5h-5zM803 324h5v5h-5zM810 329h5v5h-5zM816 333h5v5h-5zM818 333h5v5h-5zM821 327h5v5h-5zM827 322h5v5h-5zM827 333h5v5h-5zM833 324h5v5h-5zM838 330h5v5h-5zM842 323h5v5h-5zM844 324h5v5h-5zM850 331h5v5h-5zM851 338h5v5h-5zM857 345h5v5h-5zM863 327h5v5h-5zM865 322h5v5h-5zM870 323h5v5h-5zM874 324h5v5h-5zM876 322h5v5h-5zM881 322h5v5h-5zM884 340h5v5h-5zM892 327h5v5h-5zM893 333h5v5h-5zM894 325h5v5h-5zM894 334h5v5h-5zM899 340h5v5h-5zM905 322h5v5h-5zM907 321h5v5h-5zM911 325h5v5h-5zM915 319h5v5h-5zM919 317h5v5h-5zM925 340h5v5h-5zM928 319h5v5h-5zM932 332h5v5h-5zM933 326h5v5h-5zM938 322h5v5h-5zM939 335h5v5h-5zM944 320h5v5h-5zM945 316h5v5h-5zM951 326h5v5h-5zM953 345h5v5h-5zM958 335h5v5h-5zM960 334h5v5h-5zM966 321h5v5h-5zM966 328h5v5h-5zM970 323h5v5h-5zM972 324h5v5h-5zM973 335h5v5h-5zM981 331h5v5h-5zM984 324h5v5h-5zM984 337h5v5h-5zM987 322h5v5h-5zM990 331h5v5h-5zM991 322h5v5h-5zM995 322h5v5h-5zM997 336h5v5h-5z" fill="#9966cc" shape-rendering="crispEdges"/>
<line x1="599.5" y1="440.9" x2="599.5" y2="545.7" stroke="#2b2b2b" stroke-width="1"  shape-rendering="crispEdges"/>
<line x1="640.5" y1="440.9" x2="640.5" y2="545.7" stroke="#2b2b2b" stroke-width="1"  shape-rendering="crispEdges"/>
<line x1="680.5" y1="440.9" x2="680.5" y2="545.7" stroke="#2b2b2b" stroke-width="1"  shape-rendering="crispEdges"/>
<line x1="721.5" y1="440.9" x2="721.5" y2="545.7" stroke="#2b2b2b" stroke-width="1"  shape-rendering="crispEdges"/>
<line x1="762.5" y1="440.9" x2="762.5" y2="545.7" stroke="#2b2b2b" stroke-width="1"  shape-rendering="crispEdges"/>
<line x1="803.5" y1="440.9" x2="803.5" y2="545.7" stroke="#2b2b2b" stroke-width="1"  shape-rendering="crispEdges"/>
<line x1="843.5" y1="440.9" x2="843.5" y2="545.7" stroke="#2b2b2b" stroke-width="1"  shape-rendering="crispEdges"/>
<line x1="884.5" y1="440.9" x2="884.5" y2="545.7" stroke="#2b2b2b" stroke-width="1"  shape-rendering="crispEdges"/>
<line x1="925.5" y1="440.9" x2="925.5" y2="545.7" stroke="#2b2b2b" stroke-width="1"  shape-rendering="crispEdges"/>
<line x1="965.5" y1="440.9" x2="965.5" y2="545.7" stroke="#2b2b2b" stroke-width="1"  shape-rendering="crispEdges"/>
<line x1="1006.5" y1="440.9" x2="1006.5" y2="545.7" stroke="#2b2b2b" stroke-width="1"  shape-rendering="crispEdges"/>
<line x1="586.5" y1="440.5" x2="1020.8" y2="440.5" stroke="#2b2b2b" stroke-width="1"  shape-rendering="crispEdges"/>
<line x1="581.8" y1="449.5" x2="1020.8" y2="449.5" stroke="#2b2b2b" stroke-width="1"  shape-rendering="crispEdges"/>
<text transform="translate(579.4,449.9) rotate(-90) scale(0.82,1)" font-size="10.4" fill="#b4b4b4" text-anchor="middle" >0.44</text>
<line x1="586.5" y1="459.5" x2="1020.8" y2="459.5" stroke="#2b2b2b" stroke-width="1"  shape-rendering="crispEdges"/>
<line x1="586.5" y1="468.5" x2="1020.8" y2="468.5" stroke="#2b2b2b" stroke-width="1"  shape-rendering="crispEdges"/>
<line x1="586.5" y1="478.5" x2="1020.8" y2="478.5" stroke="#2b2b2b" stroke-width="1"  shape-rendering="crispEdges"/>
<line x1="581.8" y1="487.5" x2="1020.8" y2="487.5" stroke="#2b2b2b" stroke-width="1"  shape-rendering="crispEdges"/>
<text transform="translate(579.4,487.5) rotate(-90) scale(0.82,1)" font-size="10.4" fill="#b4b4b4" text-anchor="middle" >-0.00</text>
<line x1="586.5" y1="496.5" x2="1020.8" y2="496.5" stroke="#2b2b2b" stroke-width="1"  shape-rendering="crispEdges"/>
<line x1="586.5" y1="506.5" x2="1020.8" y2="506.5" stroke="#2b2b2b" stroke-width="1"  shape-rendering="crispEdges"/>
<line x1="586.5" y1="515.5" x2="1020.8" y2="515.5" stroke="#2b2b2b" stroke-width="1"  shape-rendering="crispEdges"/>
<line x1="581.8" y1="525.5" x2="1020.8" y2="525.5" stroke="#2b2b2b" stroke-width="1"  shape-rendering="crispEdges"/>
<text transform="translate(579.4,525.1) rotate(-90) scale(0.82,1)" font-size="10.4" fill="#b4b4b4" text-anchor="middle" >-0.44</text>
<line x1="586.5" y1="534.5" x2="1020.8" y2="534.5" stroke="#2b2b2b" stroke-width="1"  shape-rendering="crispEdges"/>
<rect x="586.5" y="440.5" width="434" height="101" fill="none" stroke="#343434" shape-rendering="crispEdges"/>
<line x1="586.5" y1="487.5" x2="1024" y2="487.5" stroke="#ffffff" stroke-width="1.2"  shape-rendering="crispEdges"/>
<text transform="translate(599.45,556.4) scale(0.82,1)" font-size="10.4" fill="#b4b4b4" text-anchor="middle" >-0</text>
<text transform="translate(640.16,556.4) scale(0.82,1)" font-size="10.4" fill="#b4b4b4" text-anchor="middle" >6</text>
<text transform="translate(680.87,556.4) scale(0.82,1)" font-size="10.4" fill="#b4b4b4" text-anchor="middle" >12</text>
<text transform="translate(721.58,556.4) scale(0.82,1)" font-size="10.4" fill="#b4b4b4" text-anchor="middle" >18</text>
<text transform="translate(762.29,556.4) scale(0.82,1)" font-size="10.4" fill="#b4b4b4" text-anchor="middle" >24</text>
<text transform="translate(803,556.4) scale(0.82,1)" font-size="10.4" fill="#b4b4b4" text-anchor="middle" >29</text>
<text transform="translate(843.71,556.4) scale(0.82,1)" font-size="10.4" fill="#b4b4b4" text-anchor="middle" >35</text>
<text transform="translate(884.42,556.4) scale(0.82,1)" font-size="10.4" fill="#b4b4b4" text-anchor="middle" >41</text>
<text transform="translate(925.13,556.4) scale(0.82,1)" font-size="10.4" fill="#b4b4b4" text-anchor="middle" >47</text>
<text transform="translate(965.84,556.4) scale(0.82,1)" font-size="10.4" fill="#b4b4b4" text-anchor="middle" >53</text>
<text transform="translate(1006.55,556.4) scale(0.82,1)" font-size="10.4" fill="#b4b4b4" text-anchor="middle" >59</text>
<text transform="translate(567.3,490.6) rotate(-90) scale(0.9,1)" font-size="13.0" fill="#e6e6e6" text-anchor="middle" >Vert Res [km]</text>
<text transform="translate(803,568.9) scale(0.9,1)" font-size="13.0" fill="#e6e6e6" text-anchor="middle" >Length Along Trail [km]</text>
<path d="M616.5 475.5V487.5M670.5 505.4V487.5M677.5 496.4V487.5M684.5 502.4V487.5M687.5 502.4V487.5M690.5 500.4V487.5M692.5 538.3V487.5M697.5 504.4V487.5M704.5 504.4V487.5M707.5 505.4V487.5M706.5 512.3V487.5M722.5 486.5V487.5M726.5 502.4V487.5M729.5 491.4V487.5M730.5 497.3V487.5M737.5 499.5V487.5M737.5 511.4V487.5M740.5 482.3V487.5M757.5 486.5V487.5M760.5 492.4V487.5M763.5 494.4V487.5M770.5 494.4V487.5M771.5 482.3V487.5M778.5 480.5V487.5M780.5 497.3V487.5M784.5 499.5V487.5M794.5 506.3V487.5M800.5 492.4V487.5M800.5 507.4V487.5M798.5 502.4V487.5M807.5 492.4V487.5M810.5 492.4V487.5M813.5 494.4V487.5M817.5 501.5V487.5M822.5 498.4V487.5M826.5 504.4V487.5M828.5 502.4V487.5M833.5 508.3V487.5M839.5 498.4V487.5M845.5 493.5V487.5M849.5 497.3V487.5M852.5 495.5V487.5M857.5 498.4V487.5M863.5 493.5V487.5M868.5 496.4V487.5M872.5 494.4V487.5M875.5 499.5V487.5M880.5 495.5V487.5M884.5 499.5V487.5M888.5 497.3V487.5M894.5 509.4V487.5M894.5 509.4V487.5M897.5 497.3V487.5M902.5 499.5V487.5M904.5 493.5V487.5M908.5 505.4V487.5M910.5 495.5V487.5M917.5 498.4V487.5M920.5 475.5V487.5M922.5 501.5V487.5M924.5 505.4V487.5M926.5 499.5V487.5M930.5 501.5V487.5M932.5 501.5V487.5M937.5 508.3V487.5M939.5 499.5V487.5M943.5 507.4V487.5M950.5 503.5V487.5M953.5 502.4V487.5M956.5 508.3V487.5M958.5 500.4V487.5M963.5 505.4V487.5M965.5 498.4V487.5M967.5 509.4V487.5M970.5 511.4V487.5M972.5 509.4V487.5M975.5 515.4V487.5M977.5 506.3V487.5M980.5 520.4V487.5M981.5 512.3V487.5M984.5 512.3V487.5M986.5 510.3V487.5M987.5 504.4V487.5M992.5 494.4V487.5M1005.5 528.4V487.5" stroke="#5a7400" stroke-width="1" fill="none" shape-rendering="crispEdges"/>
<path d="M614 473h5v5h-5zM668 503h5v5h-5zM675 494h5v5h-5zM682 500h5v5h-5zM685 500h5v5h-5zM688 498h5v5h-5zM690 536h5v5h-5zM695 502h5v5h-5zM702 502h5v5h-5zM705 503h5v5h-5zM704 510h5v5h-5zM720 484h5v5h-5zM724 500h5v5h-5zM727 489h5v5h-5zM728 495h5v5h-5zM735 497h5v5h-5zM735 509h5v5h-5zM738 480h5v5h-5zM755 484h5v5h-5zM758 490h5v5h-5zM761 492h5v5h-5zM768 492h5v5h-5zM769 480h5v5h-5zM776 478h5v5h-5zM778 495h5v5h-5zM782 497h5v5h-5zM792 504h5v5h-5zM798 490h5v5h-5zM798 505h5v5h-5zM796 500h5v5h-5zM805 490h5v5h-5zM808 490h5v5h-5zM811 492h5v5h-5zM815 499h5v5h-5zM820 496h5v5h-5zM824 502h5v5h-5zM826 500h5v5h-5zM831 506h5v5h-5zM837 496h5v5h-5zM843 491h5v5h-5zM847 495h5v5h-5zM850 493h5v5h-5zM855 496h5v5h-5zM861 491h5v5h-5zM866 494h5v5h-5zM870 492h5v5h-5zM873 497h5v5h-5zM878 493h5v5h-5zM882 497h5v5h-5zM886 495h5v5h-5zM892 507h5v5h-5zM892 507h5v5h-5zM895 495h5v5h-5zM900 497h5v5h-5zM902 491h5v5h-5zM906 503h5v5h-5zM908 493h5v5h-5zM915 496h5v5h-5zM918 473h5v5h-5zM920 499h5v5h-5zM922 503h5v5h-5zM924 497h5v5h-5zM928 499h5v5h-5zM930 499h5v5h-5zM935 506h5v5h-5zM937 497h5v5h-5zM941 505h5v5h-5zM948 501h5v5h-5zM951 500h5v5h-5zM954 506h5v5h-5zM956 498h5v5h-5zM961 503h5v5h-5zM963 496h5v5h-5zM965 507h5v5h-5zM968 509h5v5h-5zM970 507h5v5h-5zM973 513h5v5h-5zM975 504h5v5h-5zM978 518h5v5h-5zM979 510h5v5h-5zM982 510h5v5h-5zM984 508h5v5h-5zM985 502h5v5h-5zM990 492h5v5h-5zM1003 526h5v5h-5z" fill="#8fb800" shape-rendering="crispEdges"/>
<path d="M800.5 501.5V487.5M814.5 500.4V487.5M818.5 487.4V487.5M821.5 496.4V487.5M824.5 491.4V487.5M825.5 495.5V487.5M829.5 487.4V487.5M838.5 495.5V487.5M843.5 481.4V487.5M844.5 494.4V487.5M847.5 496.4V487.5M852.5 490.5V487.5M864.5 487.4V487.5M865.5 501.5V487.5M884.5 490.5V487.5M887.5 492.4V487.5M897.5 497.3V487.5M904.5 487.4V487.5M906.5 497.3V487.5M908.5 492.4V487.5M920.5 492.4V487.5M924.5 487.4V487.5M930.5 490.5V487.5M941.5 492.4V487.5M942.5 482.3V487.5M945.5 492.4V487.5M946.5 490.5V487.5M947.5 499.5V487.5M956.5 483.4V487.5M957.5 488.5V487.5M969.5 491.4V487.5M972.5 486.5V487.5M976.5 483.4V487.5M988.5 478.4V487.5M989.5 487.4V487.5M992.5 487.4V487.5M994.5 486.5V487.5M1000.5 480.5V487.5M1002.5 491.4V487.5M1005.5 483.4V487.5M1006.5 490.5V487.5" stroke="#3a6566" stroke-width="1" fill="none" shape-rendering="crispEdges"/>
<path d="M798 499h5v5h-5zM812 498h5v5h-5zM816 485h5v5h-5zM819 494h5v5h-5zM822 489h5v5h-5zM823 493h5v5h-5zM827 485h5v5h-5zM836 493h5v5h-5zM841 479h5v5h-5zM842 492h5v5h-5zM845 494h5v5h-5zM850 488h5v5h-5zM862 485h5v5h-5zM863 499h5v5h-5zM882 488h5v5h-5zM885 490h5v5h-5zM895 495h5v5h-5zM902 485h5v5h-5zM904 495h5v5h-5zM906 490h5v5h-5zM918 490h5v5h-5zM922 485h5v5h-5zM928 488h5v5h-5zM939 490h5v5h-5zM940 480h5v5h-5zM943 490h5v5h-5zM944 488h5v5h-5zM945 497h5v5h-5zM954 481h5v5h-5zM955 486h5v5h-5zM967 489h5v5h-5zM970 484h5v5h-5zM974 481h5v5h-5zM986 476h5v5h-5zM987 485h5v5h-5zM990 485h5v5h-5zM992 484h5v5h-5zM998 478h5v5h-5zM1000 489h5v5h-5zM1003 481h5v5h-5zM1004 488h5v5h-5z" fill="#5f9ea0" shape-rendering="crispEdges"/>
<path d="M599.5 494.4V487.5M600.5 506.3V487.5M617.5 492.4V487.5M629.5 492.4V487.5M634.5 462.5V487.5M641.5 516.3V487.5M644.5 468.4V487.5M650.5 475.5V487.5M654.5 487.4V487.5M653.5 493.5V487.5M661.5 479.4V487.5M666.5 486.5V487.5M671.5 465.5V487.5M672.5 491.4V487.5M676.5 473.3V487.5M681.5 489.6V487.5M686.5 483.4V487.5M689.5 492.4V487.5M696.5 481.4V487.5M698.5 448.4V487.5M703.5 480.5V487.5M707.5 470.4V487.5M711.5 487.4V487.5M716.5 477.5V487.5M717.5 470.4V487.5M722.5 445.3V487.5M725.5 488.5V487.5M734.5 495.5V487.5M737.5 459.4V487.5M739.5 491.4V487.5M744.5 482.3V487.5M749.5 495.5V487.5M752.5 460.5V487.5M757.5 461.4V487.5M760.5 476.4V487.5M766.5 473.3V487.5M769.5 474.4V487.5M774.5 477.5V487.5M777.5 496.4V487.5M781.5 478.4V487.5M787.5 470.4V487.5M792.5 459.4V487.5M793.5 469.3V487.5M797.5 463.4V487.5M799.5 470.4V487.5M805.5 462.5V487.5M812.5 471.3V487.5M818.5 477.5V487.5M820.5 477.5V487.5M823.5 467.3V487.5M829.5 459.4V487.5M829.5 477.5V487.5M835.5 462.5V487.5M840.5 473.3V487.5M844.5 460.5V487.5M846.5 463.4V487.5M852.5 474.4V487.5M853.5 485.4V487.5M859.5 497.3V487.5M866.5 467.3V487.5M867.5 459.4V487.5M872.5 461.4V487.5M876.5 462.5V487.5M878.5 459.4V487.5M883.5 458.3V487.5M886.5 489.6V487.5M893.5 468.4V487.5M895.5 478.4V487.5M896.5 464.5V487.5M901.5 488.5V487.5M907.5 461.4V487.5M909.5 457.4V487.5M913.5 463.4V487.5M917.5 454.3V487.5M921.5 452.4V487.5M927.5 488.5V487.5M930.5 455.4V487.5M934.5 476.4V487.5M935.5 466.4V487.5M940.5 458.3V487.5M941.5 481.4V487.5M946.5 456.3V487.5M947.5 450.4V487.5M953.5 466.4V487.5M955.5 497.3V487.5M960.5 480.5V487.5M962.5 479.4V487.5M968.5 457.4V487.5M968.5 469.3V487.5M971.5 465.4V487.5M973.5 461.4V487.5M975.5 480.5V487.5M983.5 474.4V487.5M986.5 462.5V487.5M986.5 484.5V487.5M989.5 459.4V487.5M992.5 474.4V487.5M993.5 458.3V487.5M997.5 459.4V487.5M999.5 482.3V487.5" stroke="#5e3f80" stroke-width="1" fill="none" shape-rendering="crispEdges"/>
<path d="M597 492h5v5h-5zM598 504h5v5h-5zM615 490h5v5h-5zM627 490h5v5h-5zM632 460h5v5h-5zM639 514h5v5h-5zM642 466h5v5h-5zM648 473h5v5h-5zM652 485h5v5h-5zM651 491h5v5h-5zM659 477h5v5h-5zM664 484h5v5h-5zM669 463h5v5h-5zM670 489h5v5h-5zM674 471h5v5h-5zM679 487h5v5h-5zM684 481h5v5h-5zM687 490h5v5h-5zM694 479h5v5h-5zM696 446h5v5h-5zM701 478h5v5h-5zM705 468h5v5h-5zM709 485h5v5h-5zM714 475h5v5h-5zM715 468h5v5h-5zM720 443h5v5h-5zM723 486h5v5h-5zM732 493h5v5h-5zM735 457h5v5h-5zM737 489h5v5h-5zM742 480h5v5h-5zM747 493h5v5h-5zM750 458h5v5h-5zM755 459h5v5h-5zM758 474h5v5h-5zM764 471h5v5h-5zM767 472h5v5h-5zM772 475h5v5h-5zM775 494h5v5h-5zM779 476h5v5h-5zM785 468h5v5h-5zM790 457h5v5h-5zM791 467h5v5h-5zM795 461h5v5h-5zM797 468h5v5h-5zM803 460h5v5h-5zM810 469h5v5h-5zM816 475h5v5h-5zM818 475h5v5h-5zM821 465h5v5h-5zM827 457h5v5h-5zM827 475h5v5h-5zM833 460h5v5h-5zM838 471h5v5h-5zM842 458h5v5h-5zM844 461h5v5h-5zM850 472h5v5h-5zM851 483h5v5h-5zM857 495h5v5h-5zM864 465h5v5h-5zM865 457h5v5h-5zM870 459h5v5h-5zM874 460h5v5h-5zM876 457h5v5h-5zM881 456h5v5h-5zM884 487h5v5h-5zM891 466h5v5h-5zM893 476h5v5h-5zM894 462h5v5h-5zM899 486h5v5h-5zM905 459h5v5h-5zM907 455h5v5h-5zM911 461h5v5h-5zM915 452h5v5h-5zM919 450h5v5h-5zM925 486h5v5h-5zM928 453h5v5h-5zM932 474h5v5h-5zM933 464h5v5h-5zM938 456h5v5h-5zM939 479h5v5h-5zM944 454h5v5h-5zM945 448h5v5h-5zM951 464h5v5h-5zM953 495h5v5h-5zM958 478h5v5h-5zM960 477h5v5h-5zM966 455h5v5h-5zM966 467h5v5h-5zM969 463h5v5h-5zM971 459h5v5h-5zM973 478h5v5h-5zM981 472h5v5h-5zM984 460h5v5h-5zM984 482h5v5h-5zM987 457h5v5h-5zM990 472h5v5h-5zM991 456h5v5h-5zM995 457h5v5h-5zM997 480h5v5h-5z" fill="#9966cc" shape-rendering="crispEdges"/>
</svg></body></html>
